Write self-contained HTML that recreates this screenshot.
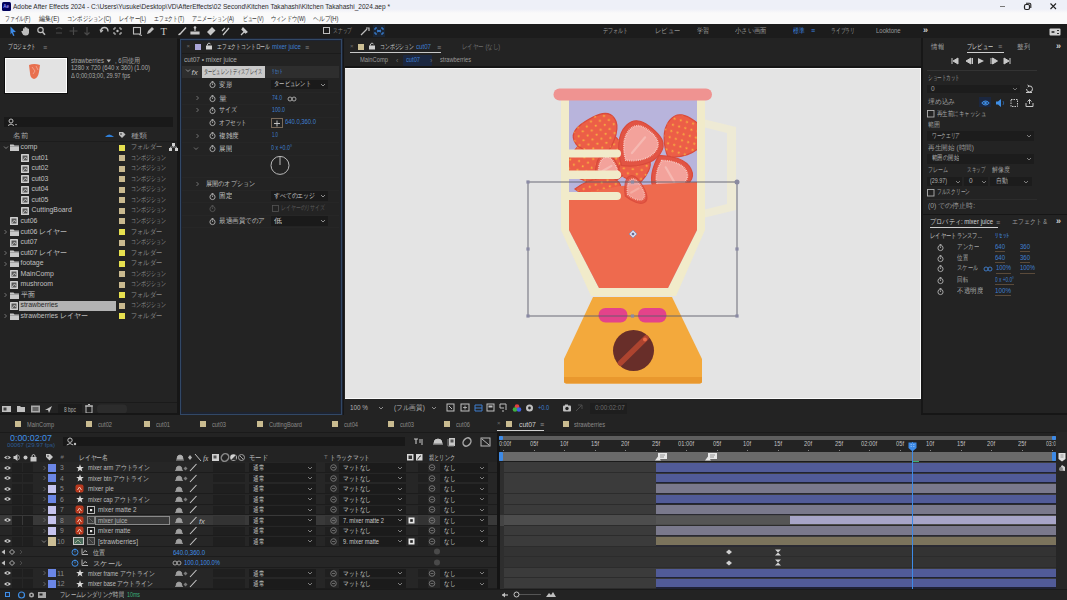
<!DOCTYPE html>
<html><head><meta charset="utf-8">
<style>
*{box-sizing:border-box;margin:0;padding:0}
html,body{width:1067px;height:600px;overflow:hidden}
body{position:relative;background:#161616;font-family:"Liberation Sans",sans-serif;color:#a8a8a8;font-size:7px;line-height:1}
.a{position:absolute}
.t{position:absolute;white-space:nowrap}
svg{overflow:visible}
</style></head><body>

<div class="a" style="left:0px;top:0px;width:1067px;height:13px;background:linear-gradient(#eef0f8 0,#eef0f8 9px,#fafafa 13px);"></div>
<div class="a" style="left:2px;top:2px;width:9px;height:9px;background:#00005b;border-radius:1.5px"></div>
<div class="t" style="left:3.2px;top:3.67px;font-size:4.5px;line-height:5.85px;color:#9999ff;font-weight:bold;">Ae</div>
<div class="t" id="t3" style="left:13px;top:1.72px;font-size:7.5px;line-height:9.75px;color:#2c2c2c;transform:scaleX(0.872);transform-origin:0 50%;">Adobe After Effects 2024 - C:\Users\Yusuke\Desktop\VD\AfterEffects\02 Second\Kitchen Takahashi\Kitchen Takahashi_2024.aep *</div>
<div class="a" style="left:999.5px;top:5.5px;width:5px;height:1px;background:#777;"></div>
<svg class="a" style="left:1023px;top:2px;" width="9" height="9" viewBox="0 0 9 9"><rect x="1.5" y="2.5" width="5" height="5" rx="1.5" fill="none" stroke="#222" stroke-width="1.2"/><path d="M3 1.2 L6.5 1.2 Q7.8 1.2 7.8 2.5 L7.8 6" fill="none" stroke="#222" stroke-width="1.1"/></svg>
<svg class="a" style="left:1049px;top:2px;" width="9" height="9" viewBox="0 0 9 9"><path d="M1.5 1.5 L7 7 M7 1.5 L1.5 7" stroke="#222" stroke-width="1.1"/></svg>
<div class="a" style="left:0px;top:13px;width:1067px;height:11px;background:#fafafa;"></div>
<div class="t" id="t8" style="left:4.6px;top:13.75px;font-size:7px;line-height:9.1px;color:#2e2e2e;transform:scaleX(0.687);transform-origin:0 50%;">ファイル(F)</div>
<div class="t" id="t9" style="left:38.5px;top:13.75px;font-size:7px;line-height:9.1px;color:#2e2e2e;transform:scaleX(0.865);transform-origin:0 50%;">編集(E)</div>
<div class="t" id="t10" style="left:67px;top:13.75px;font-size:7px;line-height:9.1px;color:#2e2e2e;transform:scaleX(0.749);transform-origin:0 50%;">コンポジション(C)</div>
<div class="t" id="t11" style="left:119px;top:13.75px;font-size:7px;line-height:9.1px;color:#2e2e2e;transform:scaleX(0.738);transform-origin:0 50%;">レイヤー(L)</div>
<div class="t" id="t12" style="left:154px;top:13.75px;font-size:7px;line-height:9.1px;color:#2e2e2e;transform:scaleX(0.683);transform-origin:0 50%;">エフェクト(T)</div>
<div class="t" id="t13" style="left:192px;top:13.75px;font-size:7px;line-height:9.1px;color:#2e2e2e;transform:scaleX(0.720);transform-origin:0 50%;">アニメーション(A)</div>
<div class="t" id="t14" style="left:242.5px;top:13.75px;font-size:7px;line-height:9.1px;color:#2e2e2e;transform:scaleX(0.676);transform-origin:0 50%;">ビュー(V)</div>
<div class="t" id="t15" style="left:271px;top:13.75px;font-size:7px;line-height:9.1px;color:#2e2e2e;transform:scaleX(0.748);transform-origin:0 50%;">ウィンドウ(W)</div>
<div class="t" id="t16" style="left:313px;top:13.75px;font-size:7px;line-height:9.1px;color:#2e2e2e;transform:scaleX(0.830);transform-origin:0 50%;">ヘルプ(H)</div>
<div class="a" style="left:0px;top:24px;width:1067px;height:14.5px;background:#1c1c1c;"></div>
<svg class="a" style="left:0px;top:24px;" width="400" height="14" viewBox="0 0 400 14">
<path d="M10.5 2.5 L16 8 L13 8.3 L14.5 11.5 L13.2 12 L11.8 8.8 L10.5 10.5 Z" fill="#3d8ae6"/>
<path d="M23 7 L23 4.5 Q23.8 3.8 24.5 4.5 L24.5 3.2 Q25.3 2.5 26 3.2 L26 3.8 Q26.8 3.2 27.5 3.8 L27.5 4.8 Q28.3 4.3 29 4.9 L29 9 Q28.5 11.5 26 11.5 L25 11.5 Q23 11.5 22 9 L21.3 7.3 Q21.8 6.5 23 7 Z" fill="#bdbdbd"/>
<circle cx="40.5" cy="6" r="2.7" fill="none" stroke="#bdbdbd" stroke-width="1.2"/>
<path d="M42.5 8 L45 10.8" stroke="#bdbdbd" stroke-width="1.5"/>
<path d="M56 5 Q59 2.5 62 5 M56 9 L62 9" stroke="#4a4a4a" stroke-width="1.2" fill="none"/>
<path d="M73.5 3 L73.5 11 M69.5 7 L77.5 7" stroke="#4a4a4a" stroke-width="1.2"/>
<path d="M87 3 L87 11 M84.5 8.5 L87 11 L89.5 8.5" stroke="#4a4a4a" stroke-width="1.2" fill="none"/>
<path d="M101 7 Q101 3.5 104.5 3.5 Q108 3.5 108 7.5" stroke="#bdbdbd" stroke-width="1.3" fill="none"/>
<path d="M100 5.5 L101 8 L103 6" stroke="#bdbdbd" stroke-width="1.1" fill="none"/>
<path d="M114 4 L116 4 M114 4 L114 6 M121 4 L119 4 M121 4 L121 6 M114 10 L116 10 M114 10 L114 8 M121 10 L119 10 M121 10 L121 8" stroke="#bdbdbd" stroke-width="1.1"/>
<circle cx="117.5" cy="7" r="1.2" fill="#bdbdbd"/>
<rect x="133.5" y="3.5" width="7" height="6.5" fill="none" stroke="#bdbdbd" stroke-width="1.1"/>
<path d="M139 10.5 L142 11.5" stroke="#bdbdbd" stroke-width="1"/>
<path d="M147 10 L148 7 L152 3 L154 5 L150 9 Z" fill="#bdbdbd"/>
<text x="160.5" y="11" font-size="10.5" fill="#c8c8c8" font-family="Liberation Serif">T</text>
<path d="M178 11 Q179 9 180 9 L185.5 3 L186.5 4 L181 10 Q180.5 11.5 178 11 Z" fill="#c8c8c8"/>
<path d="M195 3 L195 7 M191 8 L199 8 L199 10 L191 10 Z" stroke="#c8c8c8" stroke-width="1.2" fill="#c8c8c8"/>
<circle cx="195" cy="3.5" r="1.3" fill="#c8c8c8"/>
<path d="M207 8 L212 3 L215.5 6.5 L210.5 11.5 Z" fill="#c8c8c8"/>
<path d="M223 11 L229 4 M222 7 L225 4" stroke="#c8c8c8" stroke-width="1.2"/>
<path d="M241 11 L244 8 M243 4 L247 8 L245.5 9 L242 5.5 Z" stroke="#c8c8c8" stroke-width="1.2" fill="#c8c8c8"/>
<rect x="323.5" y="3.5" width="6" height="6" fill="none" stroke="#bdbdbd" stroke-width="1"/>
<path d="M361 11 L365 7 L367 5 M366 4 L369 4 L369 7" stroke="#bdbdbd" stroke-width="1.2" fill="none"/>
<rect x="373" y="1" width="12" height="12" fill="#1b2533"/>
<path d="M375 4 L377 4 M375 4 L375 6 M383 4 L381 4 M383 4 L383 6 M375 10 L377 10 M375 10 L375 8 M383 10 L381 10 M383 10 L383 8 M377 6 L381 8 M381 6 L377 8" stroke="#3d8ae6" stroke-width="1"/>
</svg>
<div class="t" id="t19" style="left:333px;top:26.45px;font-size:7px;line-height:9.1px;color:#8a8a8a;transform:scaleX(0.679);transform-origin:0 50%;">スナップ</div>
<div class="t" id="t20" style="left:602.5px;top:26.58px;font-size:6.8px;line-height:8.84px;color:#9a9a9a;transform:scaleX(0.729);transform-origin:0 50%;">デフォルト</div>
<div class="t" id="t21" style="left:655px;top:26.58px;font-size:6.8px;line-height:8.84px;color:#9a9a9a;transform:scaleX(0.893);transform-origin:0 50%;">レビュー</div>
<div class="t" id="t22" style="left:697px;top:26.58px;font-size:6.8px;line-height:8.84px;color:#9a9a9a;transform:scaleX(0.857);transform-origin:0 50%;">学習</div>
<div class="t" id="t23" style="left:735px;top:26.58px;font-size:6.8px;line-height:8.84px;color:#9a9a9a;transform:scaleX(0.903);transform-origin:0 50%;">小さい画面</div>
<div class="t" id="t24" style="left:792.5px;top:26.58px;font-size:6.8px;line-height:8.84px;color:#3d8ae6;transform:scaleX(0.821);transform-origin:0 50%;">標準</div>
<div class="t" id="t25" style="left:830.5px;top:26.58px;font-size:6.8px;line-height:8.84px;color:#9a9a9a;transform:scaleX(0.689);transform-origin:0 50%;">ライブラリ</div>
<div class="t" id="t26" style="left:876px;top:26.58px;font-size:6.8px;line-height:8.84px;color:#9a9a9a;transform:scaleX(0.883);transform-origin:0 50%;">Looktone</div>
<div class="t" style="left:811px;top:26.45px;font-size:7px;line-height:9.1px;color:#3d8ae6;">≡</div>
<div class="t" style="left:923px;top:24.75px;font-size:9px;line-height:11.7px;color:#d0d0d0;font-weight:bold;">»</div>
<svg class="a" style="left:1049px;top:27.5px;" width="12" height="8" viewBox="0 0 12 8"><rect x="0.5" y="0.5" width="11" height="7" rx="1" fill="#d0d0d0"/><path d="M2 4 Q4 2 6 4 Q4 6 2 4 Z" fill="#333"/><path d="M8 2.5 L10 2.5 M8 5.5 L10 5.5" stroke="#333" stroke-width="1"/></svg>
<div class="a" style="left:0px;top:38px;width:177px;height:376px;background:#232323;"></div>
<div class="t" id="t31" style="left:8px;top:42.25px;font-size:7px;line-height:9.1px;color:#d0d0d0;transform:scaleX(0.667);transform-origin:0 50%;">プロジェクト</div>
<div class="t" style="left:43px;top:42.75px;font-size:7px;line-height:9.1px;color:#8a8a8a;">≡</div>
<div class="a" style="left:4px;top:57px;width:64px;height:37px;background:#0e0e0e;"></div>
<div class="a" style="left:5px;top:58px;width:62px;height:35px;background:#ffffff;"></div>
<div class="a" style="left:6px;top:59px;width:60px;height:33px;background:#e3e3e3;"></div>
<svg class="a" style="left:26px;top:62px;" width="18" height="20" viewBox="0 0 18 20"><path d="M3 3 Q8 1 14 3 L13 10 Q12 16 8 17 Q4 16 4 11 Z" fill="#e8704f"/><path d="M6 5 L9 9 L7 12 M10 4 L12 8" stroke="#f3a08a" stroke-width="1" fill="none"/></svg>
<div class="t" id="t37" style="left:71px;top:56.78px;font-size:6.8px;line-height:8.84px;color:#a8a8a8;transform:scaleX(0.892);transform-origin:0 50%;">strawberries</div>
<svg class="a" style="left:106px;top:59.3px;" width="6" height="4" viewBox="0 0 6 4"><path d="M0.5 0.5 L5 0.5 L2.75 3.5 Z" fill="#b0b0b0"/></svg>
<div class="t" id="t39" style="left:115px;top:56.78px;font-size:6.8px;line-height:8.84px;color:#a8a8a8;transform:scaleX(0.875);transform-origin:0 50%;">, 6回使用</div>
<div class="t" id="t40" style="left:71px;top:64.48px;font-size:6.8px;line-height:8.84px;color:#a8a8a8;transform:scaleX(0.882);transform-origin:0 50%;">1280 x 720 (640 x 360) (1.00)</div>
<div class="t" id="t41" style="left:71px;top:71.58px;font-size:6.8px;line-height:8.84px;color:#a8a8a8;transform:scaleX(0.844);transform-origin:0 50%;">Δ 0;00;03;00, 29.97 fps</div>
<div class="a" style="left:4px;top:117px;width:169px;height:10px;background:#191919;"></div>
<svg class="a" style="left:7px;top:118px;" width="12" height="8" viewBox="0 0 12 8"><circle cx="4" cy="3" r="2" fill="none" stroke="#bdbdbd" stroke-width="1"/><path d="M1 7.5 Q4 4.5 7 7.5" stroke="#bdbdbd" fill="none"/><path d="M8 6 L10 6 L9 7.5Z" fill="#bdbdbd"/></svg>
<div class="t" id="t44" style="left:13px;top:130.95px;font-size:7px;line-height:9.1px;color:#a8a8a8;transform:scaleX(1.071);transform-origin:0 50%;">名前</div>
<svg class="a" style="left:104px;top:132px;" width="11" height="6" viewBox="0 0 11 6"><path d="M1 5 Q5 0 10 5 Z" fill="#2f7fd8"/></svg>
<svg class="a" style="left:118px;top:131px;" width="8" height="8" viewBox="0 0 8 8"><path d="M1 1 L5 1 L7.5 3.5 L4 7 L1 4 Z" fill="#bdbdbd"/><circle cx="3" cy="3" r="0.8" fill="#232323"/></svg>
<div class="t" id="t47" style="left:131px;top:130.95px;font-size:7px;line-height:9.1px;color:#a8a8a8;transform:scaleX(1.143);transform-origin:0 50%;">種類</div>
<div class="a" style="left:0px;top:141px;width:177px;height:0.8px;background:#1c1c1c;"></div>
<svg class="a" style="left:3px;top:145.1px;" width="6" height="5" viewBox="0 0 6 5"><path d="M1 1.5 L3 3.5 L5 1.5" stroke="#8a8a8a" fill="none" stroke-width="0.9"/></svg>
<svg class="a" style="left:10px;top:144.1px;" width="9" height="7" viewBox="0 0 9 7"><path d="M0 0.5 L3.5 0.5 L4.5 1.5 L9 1.5 L9 7 L0 7 Z" fill="#c8c8c8"/><rect x="0" y="2.4" width="9" height="0.6" fill="#8a8a8a"/></svg>
<div class="t" style="left:20.5px;top:143.11px;font-size:6.9px;line-height:8.97px;color:#c0c0c0;">comp</div>
<div class="a" style="left:119px;top:144.6px;width:6px;height:6px;background:#e6e04f;"></div>
<div class="t" id="t53" style="left:131px;top:143.11px;font-size:6.9px;line-height:8.97px;color:#8e8e8e;transform:scaleX(0.886);transform-origin:0 50%;overflow:hidden;">フォルダー</div>
<svg class="a" style="left:21px;top:154.15px;" width="8" height="8" viewBox="0 0 8 8"><rect x="0" y="0" width="8" height="8" fill="#cfcfcf" rx="0.5"/><rect x="1.5" y="1.5" width="5" height="5" fill="#5a5a5a"/><path d="M2 6 L4.5 3 L6 5" stroke="#cfcfcf" stroke-width="0.8" fill="none"/></svg>
<div class="t" style="left:31.5px;top:153.66px;font-size:6.9px;line-height:8.97px;color:#c0c0c0;">cut01</div>
<div class="a" style="left:119px;top:155.15px;width:6px;height:6px;background:#c9b98f;"></div>
<div class="t" id="t57" style="left:131px;top:153.66px;font-size:6.9px;line-height:8.97px;color:#8e8e8e;transform:scaleX(0.714);transform-origin:0 50%;overflow:hidden;">コンポジション</div>
<svg class="a" style="left:21px;top:164.7px;" width="8" height="8" viewBox="0 0 8 8"><rect x="0" y="0" width="8" height="8" fill="#cfcfcf" rx="0.5"/><rect x="1.5" y="1.5" width="5" height="5" fill="#5a5a5a"/><path d="M2 6 L4.5 3 L6 5" stroke="#cfcfcf" stroke-width="0.8" fill="none"/></svg>
<div class="t" style="left:31.5px;top:164.21px;font-size:6.9px;line-height:8.97px;color:#c0c0c0;">cut02</div>
<div class="a" style="left:119px;top:165.7px;width:6px;height:6px;background:#c9b98f;"></div>
<div class="t" id="t61" style="left:131px;top:164.21px;font-size:6.9px;line-height:8.97px;color:#8e8e8e;transform:scaleX(0.714);transform-origin:0 50%;overflow:hidden;">コンポジション</div>
<svg class="a" style="left:21px;top:175.25px;" width="8" height="8" viewBox="0 0 8 8"><rect x="0" y="0" width="8" height="8" fill="#cfcfcf" rx="0.5"/><rect x="1.5" y="1.5" width="5" height="5" fill="#5a5a5a"/><path d="M2 6 L4.5 3 L6 5" stroke="#cfcfcf" stroke-width="0.8" fill="none"/></svg>
<div class="t" style="left:31.5px;top:174.76px;font-size:6.9px;line-height:8.97px;color:#c0c0c0;">cut03</div>
<div class="a" style="left:119px;top:176.25px;width:6px;height:6px;background:#c9b98f;"></div>
<div class="t" id="t65" style="left:131px;top:174.76px;font-size:6.9px;line-height:8.97px;color:#8e8e8e;transform:scaleX(0.714);transform-origin:0 50%;overflow:hidden;">コンポジション</div>
<svg class="a" style="left:21px;top:185.8px;" width="8" height="8" viewBox="0 0 8 8"><rect x="0" y="0" width="8" height="8" fill="#cfcfcf" rx="0.5"/><rect x="1.5" y="1.5" width="5" height="5" fill="#5a5a5a"/><path d="M2 6 L4.5 3 L6 5" stroke="#cfcfcf" stroke-width="0.8" fill="none"/></svg>
<div class="t" style="left:31.5px;top:185.31px;font-size:6.9px;line-height:8.97px;color:#c0c0c0;">cut04</div>
<div class="a" style="left:119px;top:186.8px;width:6px;height:6px;background:#c9b98f;"></div>
<div class="t" id="t69" style="left:131px;top:185.31px;font-size:6.9px;line-height:8.97px;color:#8e8e8e;transform:scaleX(0.714);transform-origin:0 50%;overflow:hidden;">コンポジション</div>
<svg class="a" style="left:21px;top:196.35px;" width="8" height="8" viewBox="0 0 8 8"><rect x="0" y="0" width="8" height="8" fill="#cfcfcf" rx="0.5"/><rect x="1.5" y="1.5" width="5" height="5" fill="#5a5a5a"/><path d="M2 6 L4.5 3 L6 5" stroke="#cfcfcf" stroke-width="0.8" fill="none"/></svg>
<div class="t" style="left:31.5px;top:195.86px;font-size:6.9px;line-height:8.97px;color:#c0c0c0;">cut05</div>
<div class="a" style="left:119px;top:197.35px;width:6px;height:6px;background:#c9b98f;"></div>
<div class="t" id="t73" style="left:131px;top:195.86px;font-size:6.9px;line-height:8.97px;color:#8e8e8e;transform:scaleX(0.714);transform-origin:0 50%;overflow:hidden;">コンポジション</div>
<svg class="a" style="left:21px;top:206.9px;" width="8" height="8" viewBox="0 0 8 8"><rect x="0" y="0" width="8" height="8" fill="#cfcfcf" rx="0.5"/><rect x="1.5" y="1.5" width="5" height="5" fill="#5a5a5a"/><path d="M2 6 L4.5 3 L6 5" stroke="#cfcfcf" stroke-width="0.8" fill="none"/></svg>
<div class="t" style="left:31.5px;top:206.41px;font-size:6.9px;line-height:8.97px;color:#c0c0c0;">CuttingBoard</div>
<div class="a" style="left:119px;top:207.9px;width:6px;height:6px;background:#c9b98f;"></div>
<div class="t" id="t77" style="left:131px;top:206.41px;font-size:6.9px;line-height:8.97px;color:#8e8e8e;transform:scaleX(0.714);transform-origin:0 50%;overflow:hidden;">コンポジション</div>
<svg class="a" style="left:10px;top:217.45px;" width="8" height="8" viewBox="0 0 8 8"><rect x="0" y="0" width="8" height="8" fill="#cfcfcf" rx="0.5"/><rect x="1.5" y="1.5" width="5" height="5" fill="#5a5a5a"/><path d="M2 6 L4.5 3 L6 5" stroke="#cfcfcf" stroke-width="0.8" fill="none"/></svg>
<div class="t" style="left:20.5px;top:216.96px;font-size:6.9px;line-height:8.97px;color:#c0c0c0;">cut06</div>
<div class="a" style="left:119px;top:218.45px;width:6px;height:6px;background:#c9b98f;"></div>
<div class="t" id="t81" style="left:131px;top:216.96px;font-size:6.9px;line-height:8.97px;color:#8e8e8e;transform:scaleX(0.714);transform-origin:0 50%;overflow:hidden;">コンポジション</div>
<svg class="a" style="left:3px;top:229.0px;" width="5" height="6" viewBox="0 0 5 6"><path d="M1.5 1 L3.5 3 L1.5 5" stroke="#7a7a7a" fill="none" stroke-width="0.9"/></svg>
<svg class="a" style="left:10px;top:228.5px;" width="9" height="7" viewBox="0 0 9 7"><path d="M0 0.5 L3.5 0.5 L4.5 1.5 L9 1.5 L9 7 L0 7 Z" fill="#c8c8c8"/><rect x="0" y="2.4" width="9" height="0.6" fill="#8a8a8a"/></svg>
<div class="t" style="left:20.5px;top:227.51px;font-size:6.9px;line-height:8.97px;color:#c0c0c0;">cut06 レイヤー</div>
<div class="a" style="left:119px;top:229.0px;width:6px;height:6px;background:#e6e04f;"></div>
<div class="t" id="t86" style="left:131px;top:227.51px;font-size:6.9px;line-height:8.97px;color:#8e8e8e;transform:scaleX(0.886);transform-origin:0 50%;overflow:hidden;">フォルダー</div>
<svg class="a" style="left:10px;top:238.55px;" width="8" height="8" viewBox="0 0 8 8"><rect x="0" y="0" width="8" height="8" fill="#cfcfcf" rx="0.5"/><rect x="1.5" y="1.5" width="5" height="5" fill="#5a5a5a"/><path d="M2 6 L4.5 3 L6 5" stroke="#cfcfcf" stroke-width="0.8" fill="none"/></svg>
<div class="t" style="left:20.5px;top:238.06px;font-size:6.9px;line-height:8.97px;color:#c0c0c0;">cut07</div>
<div class="a" style="left:119px;top:239.55px;width:6px;height:6px;background:#c9b98f;"></div>
<div class="t" id="t90" style="left:131px;top:238.06px;font-size:6.9px;line-height:8.97px;color:#8e8e8e;transform:scaleX(0.714);transform-origin:0 50%;overflow:hidden;">コンポジション</div>
<svg class="a" style="left:3px;top:250.1px;" width="5" height="6" viewBox="0 0 5 6"><path d="M1.5 1 L3.5 3 L1.5 5" stroke="#7a7a7a" fill="none" stroke-width="0.9"/></svg>
<svg class="a" style="left:10px;top:249.6px;" width="9" height="7" viewBox="0 0 9 7"><path d="M0 0.5 L3.5 0.5 L4.5 1.5 L9 1.5 L9 7 L0 7 Z" fill="#c8c8c8"/><rect x="0" y="2.4" width="9" height="0.6" fill="#8a8a8a"/></svg>
<div class="t" style="left:20.5px;top:248.61px;font-size:6.9px;line-height:8.97px;color:#c0c0c0;">cut07 レイヤー</div>
<div class="a" style="left:119px;top:250.1px;width:6px;height:6px;background:#e6e04f;"></div>
<div class="t" id="t95" style="left:131px;top:248.61px;font-size:6.9px;line-height:8.97px;color:#8e8e8e;transform:scaleX(0.886);transform-origin:0 50%;overflow:hidden;">フォルダー</div>
<svg class="a" style="left:3px;top:260.65px;" width="5" height="6" viewBox="0 0 5 6"><path d="M1.5 1 L3.5 3 L1.5 5" stroke="#7a7a7a" fill="none" stroke-width="0.9"/></svg>
<svg class="a" style="left:10px;top:260.15px;" width="9" height="7" viewBox="0 0 9 7"><path d="M0 0.5 L3.5 0.5 L4.5 1.5 L9 1.5 L9 7 L0 7 Z" fill="#c8c8c8"/><rect x="0" y="2.4" width="9" height="0.6" fill="#8a8a8a"/></svg>
<div class="t" style="left:20.5px;top:259.16px;font-size:6.9px;line-height:8.97px;color:#c0c0c0;">footage</div>
<div class="a" style="left:119px;top:260.65px;width:6px;height:6px;background:#e6e04f;"></div>
<div class="t" id="t100" style="left:131px;top:259.16px;font-size:6.9px;line-height:8.97px;color:#8e8e8e;transform:scaleX(0.886);transform-origin:0 50%;overflow:hidden;">フォルダー</div>
<svg class="a" style="left:10px;top:270.2px;" width="8" height="8" viewBox="0 0 8 8"><rect x="0" y="0" width="8" height="8" fill="#cfcfcf" rx="0.5"/><rect x="1.5" y="1.5" width="5" height="5" fill="#5a5a5a"/><path d="M2 6 L4.5 3 L6 5" stroke="#cfcfcf" stroke-width="0.8" fill="none"/></svg>
<div class="t" style="left:20.5px;top:269.71px;font-size:6.9px;line-height:8.97px;color:#c0c0c0;">MainComp</div>
<div class="a" style="left:119px;top:271.2px;width:6px;height:6px;background:#c9b98f;"></div>
<div class="t" id="t104" style="left:131px;top:269.71px;font-size:6.9px;line-height:8.97px;color:#8e8e8e;transform:scaleX(0.714);transform-origin:0 50%;overflow:hidden;">コンポジション</div>
<svg class="a" style="left:10px;top:280.75px;" width="8" height="8" viewBox="0 0 8 8"><rect x="0" y="0" width="8" height="8" fill="#cfcfcf" rx="0.5"/><rect x="1.5" y="1.5" width="5" height="5" fill="#5a5a5a"/><path d="M2 6 L4.5 3 L6 5" stroke="#cfcfcf" stroke-width="0.8" fill="none"/></svg>
<div class="t" style="left:20.5px;top:280.26px;font-size:6.9px;line-height:8.97px;color:#c0c0c0;">mushroom</div>
<div class="a" style="left:119px;top:281.75px;width:6px;height:6px;background:#c9b98f;"></div>
<div class="t" id="t108" style="left:131px;top:280.26px;font-size:6.9px;line-height:8.97px;color:#8e8e8e;transform:scaleX(0.714);transform-origin:0 50%;overflow:hidden;">コンポジション</div>
<svg class="a" style="left:3px;top:292.3px;" width="5" height="6" viewBox="0 0 5 6"><path d="M1.5 1 L3.5 3 L1.5 5" stroke="#7a7a7a" fill="none" stroke-width="0.9"/></svg>
<svg class="a" style="left:10px;top:291.8px;" width="9" height="7" viewBox="0 0 9 7"><path d="M0 0.5 L3.5 0.5 L4.5 1.5 L9 1.5 L9 7 L0 7 Z" fill="#c8c8c8"/><rect x="0" y="2.4" width="9" height="0.6" fill="#8a8a8a"/></svg>
<div class="t" style="left:20.5px;top:290.81px;font-size:6.9px;line-height:8.97px;color:#c0c0c0;">平面</div>
<div class="a" style="left:119px;top:292.3px;width:6px;height:6px;background:#e6e04f;"></div>
<div class="t" id="t113" style="left:131px;top:290.81px;font-size:6.9px;line-height:8.97px;color:#8e8e8e;transform:scaleX(0.886);transform-origin:0 50%;overflow:hidden;">フォルダー</div>
<div class="a" style="left:19px;top:300.85px;width:97px;height:10px;background:#b3b3b3;"></div>
<svg class="a" style="left:10px;top:301.85px;" width="8" height="8" viewBox="0 0 8 8"><rect x="0" y="0" width="8" height="8" fill="#cfcfcf" rx="0.5"/><rect x="1.5" y="1.5" width="5" height="5" fill="#5a5a5a"/><path d="M2 6 L4.5 3 L6 5" stroke="#cfcfcf" stroke-width="0.8" fill="none"/></svg>
<div class="t" style="left:20.5px;top:301.37px;font-size:6.9px;line-height:8.97px;color:#2a2a2a;">strawberries</div>
<div class="a" style="left:119px;top:302.85px;width:6px;height:6px;background:#c9b98f;"></div>
<div class="t" id="t118" style="left:131px;top:301.37px;font-size:6.9px;line-height:8.97px;color:#8e8e8e;transform:scaleX(0.714);transform-origin:0 50%;overflow:hidden;">コンポジション</div>
<svg class="a" style="left:3px;top:313.4px;" width="5" height="6" viewBox="0 0 5 6"><path d="M1.5 1 L3.5 3 L1.5 5" stroke="#7a7a7a" fill="none" stroke-width="0.9"/></svg>
<svg class="a" style="left:10px;top:312.9px;" width="9" height="7" viewBox="0 0 9 7"><path d="M0 0.5 L3.5 0.5 L4.5 1.5 L9 1.5 L9 7 L0 7 Z" fill="#c8c8c8"/><rect x="0" y="2.4" width="9" height="0.6" fill="#8a8a8a"/></svg>
<div class="t" style="left:20.5px;top:311.91px;font-size:6.9px;line-height:8.97px;color:#c0c0c0;">strawberries レイヤー</div>
<div class="a" style="left:119px;top:313.4px;width:6px;height:6px;background:#e6e04f;"></div>
<div class="t" id="t123" style="left:131px;top:311.91px;font-size:6.9px;line-height:8.97px;color:#8e8e8e;transform:scaleX(0.886);transform-origin:0 50%;overflow:hidden;">フォルダー</div>
<svg class="a" style="left:169px;top:143px;" width="9" height="8" viewBox="0 0 9 8"><rect x="3" y="0" width="3" height="3" fill="#d0d0d0"/><rect x="0" y="5" width="3" height="3" fill="#d0d0d0"/><rect x="6" y="5" width="3" height="3" fill="#d0d0d0"/><path d="M4.5 3 L4.5 4 M1.5 5 L1.5 4 L7.5 4 L7.5 5" stroke="#d0d0d0" stroke-width="0.7" fill="none"/></svg>
<div class="a" style="left:0px;top:403px;width:177px;height:12px;background:#232323;"></div>
<div class="a" style="left:0px;top:402px;width:177px;height:1px;background:#1a1a1a;"></div>
<svg class="a" style="left:0px;top:403px;" width="180" height="12" viewBox="0 0 180 12">
<rect x="2" y="3" width="9" height="6" fill="#c0c0c0"/><rect x="3.5" y="4.5" width="3" height="3" fill="#444"/>
<path d="M17 3 L20 3 L21 4 L25 4 L25 9 L17 9 Z" fill="#c0c0c0"/>
<rect x="31" y="2.5" width="9" height="7" fill="#aaa"/><rect x="32.5" y="4" width="6" height="4" fill="#666"/>
<path d="M45 7 L52 3 L49 10 L48 7 Z" fill="#c0c0c0"/>
<rect x="58" y="1" width="24" height="10.5" fill="#1c1c1c" rx="1"/>
<rect x="86" y="3" width="6" height="7" fill="none" stroke="#bdbdbd" stroke-width="1"/><path d="M85 3 L93 3 M88 1.5 L90 1.5" stroke="#bdbdbd" stroke-width="1"/>
<rect x="97" y="1.5" width="30" height="9" fill="#2c2c2c" rx="4"/>
</svg>
<div class="t" id="t128" style="left:64px;top:405.97px;font-size:6.5px;line-height:8.45px;color:#b0b0b0;transform:scaleX(0.754);transform-origin:0 50%;">8 bpc</div>
<div class="a" style="left:179.5px;top:38px;width:163px;height:377.3px;background:#1d2330;"></div>
<div class="a" style="left:180px;top:38.5px;width:162px;height:376.3px;border:1.2px solid #324866;background:transparent;"></div>
<div class="a" style="left:182.3px;top:40.7px;width:157.4px;height:371.8px;background:#232323;"></div>
<div class="t" style="left:186.5px;top:43.1px;font-size:6px;line-height:7.8px;color:#6a6a6a;">×</div>
<div class="a" style="left:195px;top:44px;width:5.5px;height:5.5px;background:#a9a4d8;"></div>
<svg class="a" style="left:205px;top:42px;" width="8" height="8" viewBox="0 0 8 8"><rect x="1" y="3.5" width="6" height="4" fill="#d0d0d0"/><path d="M2.5 3.5 L2.5 2 Q4 0 5.5 2" stroke="#d0d0d0" fill="none" stroke-width="0.9"/></svg>
<div class="t" id="t135" style="left:217px;top:42.45px;font-size:7px;line-height:9.1px;color:#d0d0d0;transform:scaleX(0.688);transform-origin:0 50%;">エフェクトコントロール</div>
<div class="t" id="t136" style="left:272px;top:42.58px;font-size:6.8px;line-height:8.84px;color:#3f7fd0;transform:scaleX(0.893);transform-origin:0 50%;">mixer juice</div>
<div class="t" style="left:305px;top:42.75px;font-size:7px;line-height:9.1px;color:#8a8a8a;">≡</div>
<div class="a" style="left:181.5px;top:53px;width:159px;height:1px;background:#1b1b1b;"></div>
<div class="t" id="t139" style="left:184px;top:56.18px;font-size:6.8px;line-height:8.84px;color:#a8a8a8;transform:scaleX(0.959);transform-origin:0 50%;">cut07 • mixer juice</div>
<div class="a" style="left:181.5px;top:65.5px;width:157px;height:12.5px;background:#2e2e2e;"></div>
<svg class="a" style="left:185px;top:68px;" width="6" height="5" viewBox="0 0 6 5"><path d="M1 1.5 L3 3.5 L5 1.5" stroke="#9a9a9a" fill="none" stroke-width="0.9"/></svg>
<div class="t" style="left:191.5px;top:67.8px;font-size:8px;line-height:10.4px;color:#c0c0c0;font-family:"Liberation Serif",serif;"><i>fx</i></div>
<div class="a" style="left:202px;top:66px;width:63px;height:11.5px;background:#c9c9c9;"></div>
<div class="t" id="t144" style="left:204px;top:67.45px;font-size:7px;line-height:9.1px;color:#3a3a3a;transform:scaleX(0.592);transform-origin:0 50%;overflow:hidden;">タービュレントディスプレイス</div>
<div class="t" id="t145" style="left:272px;top:67.58px;font-size:6.8px;line-height:8.84px;color:#3f7fd0;transform:scaleX(0.625);transform-origin:0 50%;">ﾘｾｯﾄ</div>
<svg class="a" style="left:209px;top:81.2px;" width="7" height="7" viewBox="0 0 7 7"><circle cx="3.5" cy="4" r="2.6" fill="none" stroke="#b0b0b0" stroke-width="0.9"/><path d="M3.5 0.5 L3.5 1.5 M2.5 0.5 L4.5 0.5 M3.5 4 L3.5 2.5" stroke="#b0b0b0" stroke-width="0.8"/></svg>
<div class="t" id="t147" style="left:219px;top:80.15px;font-size:7px;line-height:9.1px;color:#c0c0c0;transform:scaleX(0.929);transform-origin:0 50%;">変形</div>
<div class="a" style="left:271px;top:79.7px;width:57px;height:9.6px;background:#1a1a1a;"></div>
<div class="t" id="t149" style="left:274px;top:80.08px;font-size:6.8px;line-height:8.84px;color:#c8c8c8;transform:scaleX(0.755);transform-origin:0 50%;">タービュレント</div>
<svg class="a" style="left:320px;top:82.5px;" width="6" height="4" viewBox="0 0 6 4"><path d="M1 1 L3 3 L5 1" stroke="#9a9a9a" fill="none" stroke-width="0.9"/></svg>
<svg class="a" style="left:195px;top:95.2px;" width="5" height="6" viewBox="0 0 5 6"><path d="M1.5 1 L3.5 3 L1.5 5" stroke="#7a7a7a" fill="none" stroke-width="0.9"/></svg>
<svg class="a" style="left:209px;top:94.7px;" width="7" height="7" viewBox="0 0 7 7"><circle cx="3.5" cy="4" r="2.6" fill="none" stroke="#b0b0b0" stroke-width="0.9"/><path d="M3.5 0.5 L3.5 1.5 M2.5 0.5 L4.5 0.5 M3.5 4 L3.5 2.5" stroke="#b0b0b0" stroke-width="0.8"/></svg>
<div class="t" id="t153" style="left:219px;top:93.65px;font-size:7px;line-height:9.1px;color:#c0c0c0;transform:scaleX(1.143);transform-origin:0 50%;">量</div>
<div class="t" id="t154" style="left:272px;top:93.78px;font-size:6.8px;line-height:8.84px;color:#3f7fd0;transform:scaleX(0.756);transform-origin:0 50%;">74.0</div>
<svg class="a" style="left:287px;top:95.5px;" width="10" height="6" viewBox="0 0 10 6"><circle cx="3" cy="3" r="2" fill="none" stroke="#b0b0b0" stroke-width="0.9"/><circle cx="7" cy="3" r="2" fill="none" stroke="#b0b0b0" stroke-width="0.9"/></svg>
<svg class="a" style="left:195px;top:107px;" width="5" height="6" viewBox="0 0 5 6"><path d="M1.5 1 L3.5 3 L1.5 5" stroke="#7a7a7a" fill="none" stroke-width="0.9"/></svg>
<svg class="a" style="left:209px;top:106.5px;" width="7" height="7" viewBox="0 0 7 7"><circle cx="3.5" cy="4" r="2.6" fill="none" stroke="#b0b0b0" stroke-width="0.9"/><path d="M3.5 0.5 L3.5 1.5 M2.5 0.5 L4.5 0.5 M3.5 4 L3.5 2.5" stroke="#b0b0b0" stroke-width="0.8"/></svg>
<div class="t" id="t158" style="left:219px;top:105.45px;font-size:7px;line-height:9.1px;color:#c0c0c0;transform:scaleX(0.857);transform-origin:0 50%;">サイズ</div>
<div class="t" id="t159" style="left:272px;top:105.58px;font-size:6.8px;line-height:8.84px;color:#3f7fd0;transform:scaleX(0.764);transform-origin:0 50%;">100.0</div>
<svg class="a" style="left:209px;top:119.2px;" width="7" height="7" viewBox="0 0 7 7"><circle cx="3.5" cy="4" r="2.6" fill="none" stroke="#b0b0b0" stroke-width="0.9"/><path d="M3.5 0.5 L3.5 1.5 M2.5 0.5 L4.5 0.5 M3.5 4 L3.5 2.5" stroke="#b0b0b0" stroke-width="0.8"/></svg>
<div class="t" id="t161" style="left:219px;top:118.15px;font-size:7px;line-height:9.1px;color:#c0c0c0;transform:scaleX(0.800);transform-origin:0 50%;">オフセット</div>
<div class="a" style="left:271px;top:117.5px;width:11.5px;height:10.5px;border:1px solid #7a6a5a;background:#232323;"></div>
<svg class="a" style="left:272px;top:118.5px;" width="10" height="9" viewBox="0 0 10 9"><path d="M5 1.5 L5 7.5 M2 4.5 L8 4.5" stroke="#c0c0c0" stroke-width="1"/></svg>
<div class="t" id="t164" style="left:285px;top:118.28px;font-size:6.8px;line-height:8.84px;color:#3f7fd0;transform:scaleX(0.863);transform-origin:0 50%;">640.0,360.0</div>
<svg class="a" style="left:195px;top:132.8px;" width="5" height="6" viewBox="0 0 5 6"><path d="M1.5 1 L3.5 3 L1.5 5" stroke="#7a7a7a" fill="none" stroke-width="0.9"/></svg>
<svg class="a" style="left:209px;top:132.3px;" width="7" height="7" viewBox="0 0 7 7"><circle cx="3.5" cy="4" r="2.6" fill="none" stroke="#b0b0b0" stroke-width="0.9"/><path d="M3.5 0.5 L3.5 1.5 M2.5 0.5 L4.5 0.5 M3.5 4 L3.5 2.5" stroke="#b0b0b0" stroke-width="0.8"/></svg>
<div class="t" id="t167" style="left:219px;top:131.25px;font-size:7px;line-height:9.1px;color:#c0c0c0;transform:scaleX(0.952);transform-origin:0 50%;">複雑度</div>
<div class="t" id="t168" style="left:272px;top:131.38px;font-size:6.8px;line-height:8.84px;color:#3f7fd0;transform:scaleX(0.635);transform-origin:0 50%;">1.0</div>
<svg class="a" style="left:193px;top:146.0px;" width="6" height="5" viewBox="0 0 6 5"><path d="M1 1.5 L3 3.5 L5 1.5" stroke="#7a7a7a" fill="none" stroke-width="0.9"/></svg>
<svg class="a" style="left:209px;top:145.0px;" width="7" height="7" viewBox="0 0 7 7"><circle cx="3.5" cy="4" r="2.6" fill="none" stroke="#b0b0b0" stroke-width="0.9"/><path d="M3.5 0.5 L3.5 1.5 M2.5 0.5 L4.5 0.5 M3.5 4 L3.5 2.5" stroke="#b0b0b0" stroke-width="0.8"/></svg>
<div class="t" id="t171" style="left:219px;top:143.95px;font-size:7px;line-height:9.1px;color:#c0c0c0;transform:scaleX(0.929);transform-origin:0 50%;">展開</div>
<div class="t" id="t172" style="left:271px;top:144.08px;font-size:6.8px;line-height:8.84px;color:#3f7fd0;transform:scaleX(0.775);transform-origin:0 50%;">0 x +0.0°</div>
<svg class="a" style="left:270px;top:155px;" width="20" height="20" viewBox="0 0 20 20"><circle cx="10" cy="10.4" r="9" fill="none" stroke="#b8b8b8" stroke-width="1"/><path d="M10 1.5 L10 10" stroke="#b8b8b8" stroke-width="1"/></svg>
<svg class="a" style="left:195px;top:180.6px;" width="5" height="6" viewBox="0 0 5 6"><path d="M1.5 1 L3.5 3 L1.5 5" stroke="#7a7a7a" fill="none" stroke-width="0.9"/></svg>
<div class="t" id="t175" style="left:206px;top:179.05px;font-size:7px;line-height:9.1px;color:#c0c0c0;transform:scaleX(0.875);transform-origin:0 50%;">展開のオプション</div>
<svg class="a" style="left:209px;top:192.5px;" width="7" height="7" viewBox="0 0 7 7"><circle cx="3.5" cy="4" r="2.6" fill="none" stroke="#b0b0b0" stroke-width="0.9"/><path d="M3.5 0.5 L3.5 1.5 M2.5 0.5 L4.5 0.5 M3.5 4 L3.5 2.5" stroke="#b0b0b0" stroke-width="0.8"/></svg>
<div class="t" id="t177" style="left:219px;top:191.45px;font-size:7px;line-height:9.1px;color:#c0c0c0;transform:scaleX(0.929);transform-origin:0 50%;">固定</div>
<div class="a" style="left:271px;top:191px;width:57px;height:10px;background:#1a1a1a;"></div>
<div class="t" id="t179" style="left:274px;top:191.58px;font-size:6.8px;line-height:8.84px;color:#c8c8c8;transform:scaleX(0.837);transform-origin:0 50%;">すべてのエッジ</div>
<svg class="a" style="left:320px;top:194.0px;" width="6" height="4" viewBox="0 0 6 4"><path d="M1 1 L3 3 L5 1" stroke="#9a9a9a" fill="none" stroke-width="0.9"/></svg>
<svg class="a" style="left:209px;top:204.9px;" width="7" height="7" viewBox="0 0 7 7"><circle cx="3.5" cy="4" r="2.6" fill="none" stroke="#555" stroke-width="0.9"/><path d="M3.5 0.5 L3.5 1.5 M2.5 0.5 L4.5 0.5 M3.5 4 L3.5 2.5" stroke="#555" stroke-width="0.8"/></svg>
<svg class="a" style="left:272px;top:204.5px;" width="7" height="7" viewBox="0 0 7 7"><rect x="0.5" y="0.5" width="6" height="6" fill="none" stroke="#555" stroke-width="0.8"/></svg>
<div class="t" id="t183" style="left:281px;top:203.98px;font-size:6.8px;line-height:8.84px;color:#5a5a5a;transform:scaleX(0.698);transform-origin:0 50%;">レイヤーのリサイズ</div>
<svg class="a" style="left:209px;top:217.5px;" width="7" height="7" viewBox="0 0 7 7"><circle cx="3.5" cy="4" r="2.6" fill="none" stroke="#b0b0b0" stroke-width="0.9"/><path d="M3.5 0.5 L3.5 1.5 M2.5 0.5 L4.5 0.5 M3.5 4 L3.5 2.5" stroke="#b0b0b0" stroke-width="0.8"/></svg>
<div class="t" id="t185" style="left:219px;top:216.45px;font-size:7px;line-height:9.1px;color:#c0c0c0;transform:scaleX(0.939);transform-origin:0 50%;">最適画質でのア</div>
<div class="a" style="left:271px;top:216px;width:57px;height:10px;background:#1a1a1a;"></div>
<div class="t" id="t187" style="left:274px;top:216.58px;font-size:6.8px;line-height:8.84px;color:#c8c8c8;transform:scaleX(1.143);transform-origin:0 50%;">低</div>
<svg class="a" style="left:320px;top:219.0px;" width="6" height="4" viewBox="0 0 6 4"><path d="M1 1 L3 3 L5 1" stroke="#9a9a9a" fill="none" stroke-width="0.9"/></svg>
<div class="a" style="left:181.5px;top:91.5px;width:157px;height:0.6px;background:#262626;"></div>
<div class="a" style="left:181.5px;top:104px;width:157px;height:0.6px;background:#262626;"></div>
<div class="a" style="left:181.5px;top:116.5px;width:157px;height:0.6px;background:#262626;"></div>
<div class="a" style="left:181.5px;top:129px;width:157px;height:0.6px;background:#262626;"></div>
<div class="a" style="left:181.5px;top:142px;width:157px;height:0.6px;background:#262626;"></div>
<div class="a" style="left:181.5px;top:155px;width:157px;height:0.6px;background:#262626;"></div>
<div class="a" style="left:181.5px;top:177px;width:157px;height:0.6px;background:#262626;"></div>
<div class="a" style="left:181.5px;top:189.5px;width:157px;height:0.6px;background:#262626;"></div>
<div class="a" style="left:181.5px;top:202px;width:157px;height:0.6px;background:#262626;"></div>
<div class="a" style="left:181.5px;top:214.5px;width:157px;height:0.6px;background:#262626;"></div>
<div class="a" style="left:181.5px;top:227px;width:157px;height:0.6px;background:#262626;"></div>
<div class="a" style="left:344px;top:38px;width:577px;height:377px;background:#232323;"></div>
<div class="t" style="left:350px;top:43.1px;font-size:6px;line-height:7.8px;color:#6a6a6a;">×</div>
<div class="a" style="left:358px;top:44px;width:6px;height:5.5px;background:#cdbf94;"></div>
<svg class="a" style="left:368px;top:42px;" width="8" height="8" viewBox="0 0 8 8"><rect x="1" y="3.5" width="6" height="4" fill="#d0d0d0"/><path d="M2.5 3.5 L2.5 2 Q4 0 5.5 2" stroke="#d0d0d0" fill="none" stroke-width="0.9"/></svg>
<div class="t" id="t204" style="left:380px;top:42.45px;font-size:7px;line-height:9.1px;color:#d0d0d0;transform:scaleX(0.694);transform-origin:0 50%;">コンポジション</div>
<div class="t" id="t205" style="left:416px;top:42.58px;font-size:6.8px;line-height:8.84px;color:#3f7fd0;transform:scaleX(0.901);transform-origin:0 50%;">cut07</div>
<div class="t" style="left:437px;top:42.75px;font-size:7px;line-height:9.1px;color:#8a8a8a;">≡</div>
<div class="a" style="left:350px;top:51.5px;width:91px;height:1px;background:#c8c8c8;"></div>
<div class="t" id="t208" style="left:462px;top:41.95px;font-size:7px;line-height:9.1px;color:#707070;transform:scaleX(0.782);transform-origin:0 50%;">レイヤー (なし)</div>
<div class="t" id="t209" style="left:360px;top:56.38px;font-size:6.8px;line-height:8.84px;color:#9a9a9a;transform:scaleX(0.852);transform-origin:0 50%;">MainComp</div>
<div class="t" style="left:396px;top:56.25px;font-size:7px;line-height:9.1px;color:#707070;">‹</div>
<div class="a" style="left:403px;top:55px;width:29px;height:11px;background:#1b2740;border-radius:1px"></div>
<div class="t" id="t212" style="left:406px;top:56.38px;font-size:6.8px;line-height:8.84px;color:#3f7fd0;transform:scaleX(0.841);transform-origin:0 50%;">cut07</div>
<div class="t" style="left:430px;top:56.25px;font-size:7px;line-height:9.1px;color:#707070;">›</div>
<div class="t" id="t214" style="left:440px;top:56.38px;font-size:6.8px;line-height:8.84px;color:#9a9a9a;transform:scaleX(0.837);transform-origin:0 50%;">strawberries</div>
<div class="a" style="left:345px;top:66.3px;width:576px;height:1.5px;background:#151515;"></div>
<div class="a" style="left:345px;top:68px;width:576px;height:331px;background:#e4e4e4;"></div>
<div class="a" style="left:345px;top:67.8px;width:576px;height:1px;background:#f6f6f6;"></div>
<div class="a" style="left:920px;top:68px;width:1px;height:331px;background:#fafafa;"></div>
<div class="a" style="left:345px;top:398px;width:576px;height:1px;background:#fafafa;"></div>
<svg class="a" style="left:345px;top:68px;" width="576" height="331" viewBox="0 0 576 331">
<defs>
<pattern id="dots" x="0" y="0" width="9" height="9" patternUnits="userSpaceOnUse" patternTransform="rotate(25)">
<circle cx="2.25" cy="2.25" r="1.1" fill="#f7b040"/><circle cx="6.75" cy="6.75" r="1.1" fill="#f7b040"/>
</pattern>
<clipPath id="jar"><rect x="569" y="100" width="128" height="100"/></clipPath>
</defs>
<g transform="translate(-345,-68)">
<!-- handle -->
<path d="M703 119 L736 127 L736 210 L703 218 Z M703 127 L727 133 L727 204 L703 210 Z" fill="#eeead5" fill-rule="evenodd"/>
<!-- cream jar outline -->
<path d="M561 100 L705 100 L705 230 L676 296 L591 296 L561 230 Z" fill="#f1ebca"/>
<!-- lavender inner -->
<path d="M569 100 L697 100 L697 230 L668 288 L599 288 L569 230 Z" fill="#b8b4dc"/>
<g clip-path="url(#jar)"><g transform="translate(594 161) rotate(75) translate(0 -31.0)" opacity="1"><path d="M0 62 C-12.50 53.32 -26.50 35.96 -25.00 18.60 C-24.00 1.86 -11.00 0 0 0 C11.00 0 24.00 1.86 25.00 18.60 C26.50 35.96 12.50 53.32 0 62 Z" fill="#ec5e47" stroke="#d94a3b" stroke-width="1.2"/><path d="M0 62 C-12.50 53.32 -26.50 35.96 -25.00 18.60 C-24.00 1.86 -11.00 0 0 0 C11.00 0 24.00 1.86 25.00 18.60 C26.50 35.96 12.50 53.32 0 62 Z" fill="url(#dots)"/></g><g transform="translate(598 136) rotate(-30) translate(0 -19.0)" opacity="1"><path d="M0 38 C-11.50 32.68 -24.38 22.04 -23.00 11.40 C-22.08 1.14 -10.12 0 0 0 C10.12 0 22.08 1.14 23.00 11.40 C24.38 22.04 11.50 32.68 0 38 Z" fill="#ec5e47" stroke="#d94a3b" stroke-width="1.2"/><path d="M0 38 C-11.50 32.68 -24.38 22.04 -23.00 11.40 C-22.08 1.14 -10.12 0 0 0 C10.12 0 22.08 1.14 23.00 11.40 C24.38 22.04 11.50 32.68 0 38 Z" fill="url(#dots)"/></g><g transform="translate(681 139) rotate(35) translate(0 -22.5)" opacity="1"><path d="M0 45 C-10.00 38.70 -21.20 26.10 -20.00 13.50 C-19.20 1.35 -8.80 0 0 0 C8.80 0 19.20 1.35 20.00 13.50 C21.20 26.10 10.00 38.70 0 45 Z" fill="#ec5e47" stroke="#d94a3b" stroke-width="1.2"/><path d="M0 45 C-10.00 38.70 -21.20 26.10 -20.00 13.50 C-19.20 1.35 -8.80 0 0 0 C8.80 0 19.20 1.35 20.00 13.50 C21.20 26.10 10.00 38.70 0 45 Z" fill="url(#dots)"/></g><g transform="translate(606 169) rotate(60) translate(0 -12.0)" opacity="1"><path d="M0 24 C-7.00 20.64 -14.84 13.92 -14.00 7.20 C-13.44 0.72 -6.16 0 0 0 C6.16 0 13.44 0.72 14.00 7.20 C14.84 13.92 7.00 20.64 0 24 Z" fill="#e25444" stroke="#d94a3b" stroke-width="1.2"/><g transform="translate(0 1.92)"><path d="M0 18.72 C-5.32 16.10 -11.28 10.86 -10.64 5.62 C-10.21 0.56 -4.68 0 0 0 C4.68 0 10.21 0.56 10.64 5.62 C11.28 10.86 5.32 16.10 0 18.72 Z" fill="#f3a29b" stroke="#f8c9c2" stroke-width="1.6" stroke-dasharray="0.9 0.9"/><path d="M0 3.74 L0 14.04" stroke="#f6b9b2" stroke-width="2.2" stroke-linecap="round"/></g></g><g transform="translate(636 170) rotate(-20) translate(0 -13.0)" opacity="1"><path d="M0 26 C-8.00 22.36 -16.96 15.08 -16.00 7.80 C-15.36 0.78 -7.04 0 0 0 C7.04 0 15.36 0.78 16.00 7.80 C16.96 15.08 8.00 22.36 0 26 Z" fill="#ec5e47" stroke="#d94a3b" stroke-width="1.2"/><path d="M0 26 C-8.00 22.36 -16.96 15.08 -16.00 7.80 C-15.36 0.78 -7.04 0 0 0 C7.04 0 15.36 0.78 16.00 7.80 C16.96 15.08 8.00 22.36 0 26 Z" fill="url(#dots)"/></g><g transform="translate(637 147) rotate(40) translate(0 -24.0)" opacity="1"><path d="M0 48 C-11.00 41.28 -23.32 27.84 -22.00 14.40 C-21.12 1.44 -9.68 0 0 0 C9.68 0 21.12 1.44 22.00 14.40 C23.32 27.84 11.00 41.28 0 48 Z" fill="#e25444" stroke="#d94a3b" stroke-width="1.2"/><g transform="translate(0 3.84)"><path d="M0 37.44 C-8.36 32.20 -17.72 21.72 -16.72 11.23 C-16.05 1.12 -7.36 0 0 0 C7.36 0 16.05 1.12 16.72 11.23 C17.72 21.72 8.36 32.20 0 37.44 Z" fill="#f3a29b" stroke="#f8c9c2" stroke-width="1.6" stroke-dasharray="0.9 0.9"/><path d="M0 7.49 L0 28.08" stroke="#f6b9b2" stroke-width="2.2" stroke-linecap="round"/></g></g><g transform="translate(669 173) rotate(150) translate(0 -20.0)" opacity="1"><path d="M0 40 C-10.50 34.40 -22.26 23.20 -21.00 12.00 C-20.16 1.20 -9.24 0 0 0 C9.24 0 20.16 1.20 21.00 12.00 C22.26 23.20 10.50 34.40 0 40 Z" fill="#e25444" stroke="#d94a3b" stroke-width="1.2"/><g transform="translate(0 3.20)"><path d="M0 31.200000000000003 C-7.98 26.83 -16.92 18.10 -15.96 9.36 C-15.32 0.94 -7.02 0 0 0 C7.02 0 15.32 0.94 15.96 9.36 C16.92 18.10 7.98 26.83 0 31.200000000000003 Z" fill="#f3a29b" stroke="#f8c9c2" stroke-width="1.6" stroke-dasharray="0.9 0.9"/><path d="M0 6.24 L0 23.40" stroke="#f6b9b2" stroke-width="2.2" stroke-linecap="round"/></g></g><g transform="translate(598 189) rotate(90) translate(0 -23.0)" opacity="1"><path d="M0 46 C-5.50 39.56 -11.66 26.68 -11.00 13.80 C-10.56 1.38 -4.84 0 0 0 C4.84 0 10.56 1.38 11.00 13.80 C11.66 26.68 5.50 39.56 0 46 Z" fill="#ec5e47" stroke="#d94a3b" stroke-width="1.2"/><path d="M0 46 C-5.50 39.56 -11.66 26.68 -11.00 13.80 C-10.56 1.38 -4.84 0 0 0 C4.84 0 10.56 1.38 11.00 13.80 C11.66 26.68 5.50 39.56 0 46 Z" fill="url(#dots)"/></g></g>
<!-- juice -->
<path d="M569 196 L620 186 L697 182 L697 230 L668 288 L599 288 L569 230 Z" fill="#ee6a4e"/><g transform="translate(634 191) rotate(60) translate(0 -10.0)" opacity="0.85"><path d="M0 20 C-7.50 17.20 -15.90 11.60 -15.00 6.00 C-14.40 0.60 -6.60 0 0 0 C6.60 0 14.40 0.60 15.00 6.00 C15.90 11.60 7.50 17.20 0 20 Z" fill="#e25444" stroke="#d94a3b" stroke-width="1.2"/><g transform="translate(0 1.60)"><path d="M0 15.600000000000001 C-5.70 13.42 -12.08 9.05 -11.40 4.68 C-10.94 0.47 -5.02 0 0 0 C5.02 0 10.94 0.47 11.40 4.68 C12.08 9.05 5.70 13.42 0 15.600000000000001 Z" fill="#f3a29b" stroke="#f8c9c2" stroke-width="1.6" stroke-dasharray="0.9 0.9"/><path d="M0 3.12 L0 11.70" stroke="#f6b9b2" stroke-width="2.2" stroke-linecap="round"/></g></g>
<!-- measurement bars -->
<path d="M569 149.5 L617 149.5 A4 4 0 0 1 617 157.5 L569 157.5 Z" fill="#f1ebca"/>
<path d="M569 170.5 L617 170.5 A4.2 4.2 0 0 1 617 179 L569 179 Z" fill="#f1ebca"/>
<path d="M569 192 L617 192 A4 4 0 0 1 617 200 L569 200 Z" fill="#f1ebca"/>
<!-- lid -->
<rect x="553.5" y="88.5" width="158.5" height="12" rx="6" fill="#ef9391"/>
<!-- base -->
<path d="M593 297 L672 297 L702 359 L702 381 Q702 383.5 699.5 383.5 L566.5 383.5 Q564 383.5 564 381 L564 359 Z" fill="#f3a93c"/>
<path d="M564 377 L702 377 L702 381 Q702 383.5 699.5 383.5 L566.5 383.5 Q564 383.5 564 381 Z" fill="#e9982e"/>
<rect x="598.5" y="308" width="29" height="14.5" rx="7" fill="#e4438a"/>
<rect x="638" y="308" width="28.5" height="14.5" rx="7" fill="#e4438a"/>
<circle cx="633.5" cy="350.5" r="20.5" fill="#682e29"/>
<path d="M620.5 363 L646 338" stroke="#ad442f" stroke-width="5.5" stroke-linecap="round"/>
<circle cx="645" cy="339.5" r="2" fill="#e86a48"/>
<!-- selection box -->
<rect x="528" y="182" width="209" height="134" fill="none" stroke="#5e5e6c" stroke-width="0.9"/>
<g fill="#8a8aa4"><rect x="526.4" y="180.4" width="3.2" height="3.2"/><rect x="630.9" y="180.4" width="3.2" height="3.2"/><rect x="526.4" y="247.4" width="3.2" height="3.2"/><rect x="735.4" y="247.4" width="3.2" height="3.2"/><rect x="526.4" y="314.4" width="3.2" height="3.2"/><rect x="630.9" y="314.4" width="3.2" height="3.2"/><rect x="735.4" y="314.4" width="3.2" height="3.2"/></g>
<circle cx="737" cy="182" r="2.5" fill="#8a8aa0"/>
<!-- anchor -->
<g transform="translate(633 234)"><path d="M0 -4 L4 0 L0 4 L-4 0 Z" fill="#d8d8ec" stroke="#8a8aa8" stroke-width="0.8"/><circle r="1.3" fill="#6a6a90"/></g>
</g>
</svg>
<div class="a" style="left:344px;top:399px;width:577px;height:16px;background:#232323;"></div>
<div class="t" id="t222" style="left:350px;top:403.88px;font-size:6.8px;line-height:8.84px;color:#b0b0b0;transform:scaleX(0.934);transform-origin:0 50%;">100 %</div>
<svg class="a" style="left:378px;top:406px;" width="6" height="4" viewBox="0 0 6 4"><path d="M1 1 L3 3 L5 1" stroke="#9a9a9a" fill="none" stroke-width="0.9"/></svg>
<div class="t" id="t224" style="left:394px;top:403.88px;font-size:6.8px;line-height:8.84px;color:#b0b0b0;transform:scaleX(0.953);transform-origin:0 50%;">(フル画質)</div>
<svg class="a" style="left:431px;top:406px;" width="6" height="4" viewBox="0 0 6 4"><path d="M1 1 L3 3 L5 1" stroke="#9a9a9a" fill="none" stroke-width="0.9"/></svg>
<svg class="a" style="left:444px;top:401px;" width="140" height="14" viewBox="0 0 140 14">
<rect x="3" y="3" width="7" height="7" fill="none" stroke="#c0c0c0" stroke-width="1"/><path d="M5 5 L8 8" stroke="#c0c0c0"/>
<rect x="17" y="3" width="8" height="7" fill="none" stroke="#c0c0c0" stroke-width="1"/><path d="M19 6.5 L23 6.5 M21 4.5 L21 8.5" stroke="#c0c0c0" stroke-width="0.8"/>
<path d="M31 10 L31 4 L38 4 L38 10 Z M31 7 L38 7" stroke="#3f7fd0" stroke-width="1" fill="none"/>
<rect x="43" y="3" width="7" height="7" fill="none" stroke="#c0c0c0" stroke-width="1"/><rect x="44.5" y="4.5" width="4" height="2" fill="#c0c0c0"/>
<path d="M56 3 L62 3 L62 9 M56 3 L56 7 L60 7 M59 9 L59 11" stroke="#c0c0c0" stroke-width="1" fill="none"/>
<circle cx="73" cy="5.5" r="2.3" fill="#e04040"/><circle cx="71" cy="8.5" r="2.3" fill="#40b040"/><circle cx="75" cy="8.5" r="2.3" fill="#4060e0"/>
<circle cx="85.5" cy="7" r="3.5" fill="#c0c0c0"/><circle cx="85.5" cy="7" r="1.4" fill="#232323"/>
<rect x="119" y="4.5" width="8" height="6" fill="#c0c0c0" rx="1"/><circle cx="123" cy="7.5" r="1.7" fill="#232323"/><rect x="121" y="3.5" width="3" height="1.5" fill="#c0c0c0"/>
<path d="M132 10 L138 4 M134 4 L138 4 L138 8" stroke="#4a4a4a" stroke-width="1" fill="none"/>
</svg>
<div class="t" id="t227" style="left:538px;top:404.2px;font-size:6.3px;line-height:8.19px;color:#3f7fd0;transform:scaleX(0.884);transform-origin:0 50%;">+0.0</div>
<div class="a" style="left:590px;top:402.5px;width:37px;height:11px;background:#1e1e1e;"></div>
<div class="t" id="t229" style="left:595px;top:404.2px;font-size:6.3px;line-height:8.19px;color:#6a6a6a;">0:00:02:07</div>
<div class="a" style="left:921px;top:38px;width:2.5px;height:377px;background:#171717;"></div>
<div class="a" style="left:923px;top:38px;width:144px;height:376px;background:#232323;"></div>
<div class="t" id="t232" style="left:931px;top:42.25px;font-size:7px;line-height:9.1px;color:#a0a0a0;transform:scaleX(0.929);transform-origin:0 50%;">情報</div>
<div class="t" id="t233" style="left:967px;top:42.25px;font-size:7px;line-height:9.1px;color:#d8d8d8;transform:scaleX(0.743);transform-origin:0 50%;">プレビュー</div>
<div class="t" style="left:998px;top:42.45px;font-size:7px;line-height:9.1px;color:#8a8a8a;">≡</div>
<div class="a" style="left:967px;top:51.5px;width:37px;height:1px;background:#d0d0d0;"></div>
<div class="t" id="t236" style="left:1017px;top:42.25px;font-size:7px;line-height:9.1px;color:#a0a0a0;transform:scaleX(0.929);transform-origin:0 50%;">整列</div>
<div class="t" style="left:1056px;top:40.65px;font-size:9px;line-height:11.7px;color:#d0d0d0;font-weight:bold;">»</div>
<svg class="a" style="left:945px;top:56px;" width="70" height="10" viewBox="0 0 70 10">
<path d="M7 2 L7 8 M13 2 L8 5 L13 8 Z" stroke="#c8c8c8" fill="#c8c8c8" stroke-width="1"/>
<path d="M26 2 L21 5 L26 8 Z M27.5 2 L27.5 8" stroke="#c8c8c8" fill="#c8c8c8" stroke-width="1"/>
<path d="M33 2 L39 5 L33 8 Z" fill="#c8c8c8"/>
<path d="M46 2 L46 8 M47.5 2 L52.5 5 L47.5 8 Z" stroke="#c8c8c8" fill="#c8c8c8" stroke-width="1"/>
<path d="M59 2 L64 5 L59 8 Z M65 2 L65 8" stroke="#c8c8c8" fill="#c8c8c8" stroke-width="1"/>
</svg>
<div class="a" style="left:927px;top:70px;width:110px;height:0.8px;background:#333;"></div>
<div class="t" id="t240" style="left:928px;top:73.58px;font-size:6.8px;line-height:8.84px;color:#9a9a9a;transform:scaleX(0.653);transform-origin:0 50%;">ショートカット</div>
<div class="a" style="left:927px;top:84.5px;width:93px;height:8.5px;background:#1c1c1c;"></div>
<div class="t" style="left:931px;top:84.58px;font-size:6.5px;line-height:8.45px;color:#a0a0a0;">0</div>
<svg class="a" style="left:1012px;top:87px;" width="6" height="4" viewBox="0 0 6 4"><path d="M1 1 L3 3 L5 1" stroke="#7a7a7a" fill="none" stroke-width="0.9"/></svg>
<svg class="a" style="left:1024px;top:84px;" width="10" height="10" viewBox="0 0 10 10"><path d="M2.5 5 A3 3 0 1 0 5 2 L3.5 1 M5 2 L3.8 3.3" stroke="#c8c8c8" fill="none" stroke-width="1"/><path d="M2 8.5 L8 8.5" stroke="#c8c8c8"/></svg>
<div class="t" id="t245" style="left:928px;top:97.58px;font-size:6.8px;line-height:8.84px;color:#9a9a9a;transform:scaleX(0.964);transform-origin:0 50%;">埋め込み</div>
<div class="a" style="left:979px;top:97px;width:12px;height:10px;background:#1b2740;"></div>
<svg class="a" style="left:980px;top:98px;" width="60" height="10" viewBox="0 0 60 10">
<path d="M2 5 Q5.5 1 9 5 Q5.5 9 2 5 Z" fill="none" stroke="#3f8fe6" stroke-width="1.1"/><circle cx="5.5" cy="5" r="1.3" fill="#3f8fe6"/>
<path d="M16 3.5 L18 3.5 L21 1 L21 9 L18 6.5 L16 6.5 Z" fill="#3f8fe6"/><path d="M23 3 Q24.5 5 23 7" stroke="#2a5a90" fill="none" stroke-width="1"/>
<rect x="31" y="1.5" width="6.5" height="7" fill="none" stroke="#c8c8c8" stroke-width="1" stroke-dasharray="1.5 1"/>
<path d="M46 5 L46 8.5 L53 8.5 L53 5 M49.5 6 L49.5 1.5 M47.5 3.5 L49.5 1.5 L51.5 3.5" stroke="#c8c8c8" fill="none" stroke-width="1"/>
</svg>
<svg class="a" style="left:927px;top:110px;" width="8" height="8" viewBox="0 0 8 8"><rect x="0.5" y="0.5" width="6.5" height="6.5" fill="none" stroke="#b0b0b0" stroke-width="0.9"/></svg>
<div class="t" id="t249" style="left:937px;top:109.58px;font-size:6.8px;line-height:8.84px;color:#a8a8a8;transform:scaleX(0.778);transform-origin:0 50%;">再生前にキャッシュ</div>
<div class="t" id="t250" style="left:928px;top:121.08px;font-size:6.8px;line-height:8.84px;color:#9a9a9a;transform:scaleX(0.857);transform-origin:0 50%;">範囲</div>
<div class="a" style="left:927px;top:131px;width:107px;height:10px;background:#1c1c1c;"></div>
<div class="t" id="t252" style="left:932px;top:131.58px;font-size:6.8px;line-height:8.84px;color:#b0b0b0;transform:scaleX(0.667);transform-origin:0 50%;">ワークエリア</div>
<svg class="a" style="left:1026px;top:134px;" width="6" height="4" viewBox="0 0 6 4"><path d="M1 1 L3 3 L5 1" stroke="#8a8a8a" fill="none" stroke-width="0.9"/></svg>
<div class="t" id="t254" style="left:928px;top:143.58px;font-size:6.8px;line-height:8.84px;color:#9a9a9a;transform:scaleX(0.950);transform-origin:0 50%;">再生開始 (時間)</div>
<div class="a" style="left:927px;top:153.5px;width:107px;height:10px;background:#1c1c1c;"></div>
<div class="t" id="t256" style="left:932px;top:154.08px;font-size:6.8px;line-height:8.84px;color:#b0b0b0;transform:scaleX(0.771);transform-origin:0 50%;">範囲の開始</div>
<svg class="a" style="left:1026px;top:156.5px;" width="6" height="4" viewBox="0 0 6 4"><path d="M1 1 L3 3 L5 1" stroke="#8a8a8a" fill="none" stroke-width="0.9"/></svg>
<div class="t" id="t258" style="left:928px;top:165.58px;font-size:6.8px;line-height:8.84px;color:#9a9a9a;transform:scaleX(0.714);transform-origin:0 50%;">フレーム</div>
<div class="t" id="t259" style="left:967px;top:165.58px;font-size:6.8px;line-height:8.84px;color:#9a9a9a;transform:scaleX(0.643);transform-origin:0 50%;">スキップ</div>
<div class="t" id="t260" style="left:992px;top:165.58px;font-size:6.8px;line-height:8.84px;color:#9a9a9a;transform:scaleX(0.857);transform-origin:0 50%;">解像度</div>
<div class="a" style="left:927px;top:177px;width:35px;height:9px;background:#1c1c1c;"></div>
<div class="t" id="t262" style="left:930px;top:177.28px;font-size:6.5px;line-height:8.45px;color:#b0b0b0;transform:scaleX(0.825);transform-origin:0 50%;">(29.97)</div>
<svg class="a" style="left:955px;top:179.5px;" width="6" height="4" viewBox="0 0 6 4"><path d="M1 1 L3 3 L5 1" stroke="#8a8a8a" fill="none" stroke-width="0.9"/></svg>
<div class="a" style="left:964px;top:177px;width:24px;height:9px;background:#1c1c1c;"></div>
<div class="t" style="left:969px;top:177.28px;font-size:6.5px;line-height:8.45px;color:#b0b0b0;">0</div>
<svg class="a" style="left:981px;top:179.5px;" width="6" height="4" viewBox="0 0 6 4"><path d="M1 1 L3 3 L5 1" stroke="#8a8a8a" fill="none" stroke-width="0.9"/></svg>
<div class="a" style="left:990px;top:177px;width:42px;height:9px;background:#1c1c1c;"></div>
<div class="t" id="t268" style="left:996px;top:177.08px;font-size:6.8px;line-height:8.84px;color:#b0b0b0;transform:scaleX(0.857);transform-origin:0 50%;">自動</div>
<svg class="a" style="left:1023px;top:179.5px;" width="6" height="4" viewBox="0 0 6 4"><path d="M1 1 L3 3 L5 1" stroke="#8a8a8a" fill="none" stroke-width="0.9"/></svg>
<svg class="a" style="left:927px;top:188.5px;" width="8" height="8" viewBox="0 0 8 8"><rect x="0.5" y="0.5" width="6.5" height="6.5" fill="none" stroke="#b0b0b0" stroke-width="0.9"/></svg>
<div class="t" id="t271" style="left:937px;top:188.08px;font-size:6.8px;line-height:8.84px;color:#a8a8a8;transform:scaleX(0.673);transform-origin:0 50%;">フルスクリーン</div>
<div class="a" style="left:927px;top:199px;width:110px;height:0.7px;background:#2c2c2c;"></div>
<div class="t" id="t273" style="left:928px;top:201.58px;font-size:6.8px;line-height:8.84px;color:#9a9a9a;">(0) での停止時:</div>
<div class="a" style="left:923px;top:213.5px;width:144px;height:1.5px;background:#161616;"></div>
<div class="t" id="t275" style="left:930px;top:217.58px;font-size:6.8px;line-height:8.84px;color:#d0d0d0;transform:scaleX(0.884);transform-origin:0 50%;">プロパティ: mixer juice</div>
<div class="t" style="left:996px;top:217.75px;font-size:7px;line-height:9.1px;color:#8a8a8a;">≡</div>
<div class="a" style="left:930px;top:227px;width:68px;height:1px;background:#d0d0d0;"></div>
<div class="t" id="t278" style="left:1012px;top:217.58px;font-size:6.8px;line-height:8.84px;color:#9a9a9a;transform:scaleX(0.845);transform-origin:0 50%;">エフェクト &amp;</div>
<div class="t" style="left:1056px;top:215.85px;font-size:9px;line-height:11.7px;color:#d0d0d0;font-weight:bold;">»</div>
<div class="t" id="t280" style="left:930px;top:231.58px;font-size:6.8px;line-height:8.84px;color:#c0c0c0;transform:scaleX(0.757);transform-origin:0 50%;">レイヤートランスフ...</div>
<div class="t" id="t281" style="left:995px;top:231.58px;font-size:6.8px;line-height:8.84px;color:#3f7fd0;transform:scaleX(0.938);transform-origin:0 50%;">ﾘｾｯﾄ</div>
<svg class="a" style="left:937px;top:243.5px;" width="7" height="7" viewBox="0 0 7 7"><circle cx="3.5" cy="4" r="2.6" fill="none" stroke="#b0b0b0" stroke-width="0.9"/><path d="M3.5 0.5 L3.5 1.5 M2.5 0.5 L4.5 0.5 M3.5 4 L3.5 2.5" stroke="#b0b0b0" stroke-width="0.8"/></svg>
<div class="t" id="t283" style="left:957px;top:242.58px;font-size:6.8px;line-height:8.84px;color:#a8a8a8;transform:scaleX(0.786);transform-origin:0 50%;">アンカー</div>
<svg class="a" style="left:937px;top:254.5px;" width="7" height="7" viewBox="0 0 7 7"><circle cx="3.5" cy="4" r="2.6" fill="none" stroke="#b0b0b0" stroke-width="0.9"/><path d="M3.5 0.5 L3.5 1.5 M2.5 0.5 L4.5 0.5 M3.5 4 L3.5 2.5" stroke="#b0b0b0" stroke-width="0.8"/></svg>
<div class="t" id="t285" style="left:957px;top:253.58px;font-size:6.8px;line-height:8.84px;color:#a8a8a8;transform:scaleX(0.786);transform-origin:0 50%;">位置</div>
<svg class="a" style="left:937px;top:265.3px;" width="7" height="7" viewBox="0 0 7 7"><circle cx="3.5" cy="4" r="2.6" fill="none" stroke="#b0b0b0" stroke-width="0.9"/><path d="M3.5 0.5 L3.5 1.5 M2.5 0.5 L4.5 0.5 M3.5 4 L3.5 2.5" stroke="#b0b0b0" stroke-width="0.8"/></svg>
<div class="t" id="t287" style="left:957px;top:264.38px;font-size:6.8px;line-height:8.84px;color:#a8a8a8;transform:scaleX(0.750);transform-origin:0 50%;">スケール</div>
<svg class="a" style="left:937px;top:276.5px;" width="7" height="7" viewBox="0 0 7 7"><circle cx="3.5" cy="4" r="2.6" fill="none" stroke="#b0b0b0" stroke-width="0.9"/><path d="M3.5 0.5 L3.5 1.5 M2.5 0.5 L4.5 0.5 M3.5 4 L3.5 2.5" stroke="#b0b0b0" stroke-width="0.8"/></svg>
<div class="t" id="t289" style="left:957px;top:275.58px;font-size:6.8px;line-height:8.84px;color:#a8a8a8;transform:scaleX(0.786);transform-origin:0 50%;">回転</div>
<svg class="a" style="left:937px;top:287.5px;" width="7" height="7" viewBox="0 0 7 7"><circle cx="3.5" cy="4" r="2.6" fill="none" stroke="#b0b0b0" stroke-width="0.9"/><path d="M3.5 0.5 L3.5 1.5 M2.5 0.5 L4.5 0.5 M3.5 4 L3.5 2.5" stroke="#b0b0b0" stroke-width="0.8"/></svg>
<div class="t" id="t291" style="left:957px;top:286.58px;font-size:6.8px;line-height:8.84px;color:#a8a8a8;transform:scaleX(0.929);transform-origin:0 50%;">不透明度</div>
<div class="t" id="t292" style="left:995px;top:242.58px;font-size:6.8px;line-height:8.84px;color:#3f7fd0;transform:scaleX(0.882);transform-origin:0 50%;">640</div>
<div class="a" style="left:995px;top:251px;width:10px;height:0.6px;background:#5a4a3a;"></div>
<div class="t" id="t294" style="left:1020px;top:242.58px;font-size:6.8px;line-height:8.84px;color:#3f7fd0;transform:scaleX(0.882);transform-origin:0 50%;">360</div>
<div class="a" style="left:1020px;top:251px;width:10px;height:0.6px;background:#5a4a3a;"></div>
<div class="t" id="t296" style="left:995px;top:253.58px;font-size:6.8px;line-height:8.84px;color:#3f7fd0;transform:scaleX(0.882);transform-origin:0 50%;">640</div>
<div class="a" style="left:995px;top:262px;width:10px;height:0.6px;background:#5a4a3a;"></div>
<div class="t" id="t298" style="left:1020px;top:253.58px;font-size:6.8px;line-height:8.84px;color:#3f7fd0;transform:scaleX(0.882);transform-origin:0 50%;">360</div>
<div class="a" style="left:1020px;top:262px;width:10px;height:0.6px;background:#5a4a3a;"></div>
<svg class="a" style="left:983px;top:266px;" width="10" height="6" viewBox="0 0 10 6"><circle cx="3" cy="3" r="2" fill="none" stroke="#3f7fd0" stroke-width="0.9"/><circle cx="7" cy="3" r="2" fill="none" stroke="#3f7fd0" stroke-width="0.9"/></svg>
<div class="t" id="t301" style="left:996px;top:264.38px;font-size:6.8px;line-height:8.84px;color:#3f7fd0;transform:scaleX(0.863);transform-origin:0 50%;">100%</div>
<div class="a" style="left:996px;top:272.8px;width:15px;height:0.6px;background:#5a4a3a;"></div>
<div class="t" id="t303" style="left:1020px;top:264.38px;font-size:6.8px;line-height:8.84px;color:#3f7fd0;transform:scaleX(0.863);transform-origin:0 50%;">100%</div>
<div class="a" style="left:1020px;top:272.8px;width:15px;height:0.6px;background:#5a4a3a;"></div>
<div class="t" id="t305" style="left:995px;top:275.58px;font-size:6.8px;line-height:8.84px;color:#3f7fd0;transform:scaleX(0.701);transform-origin:0 50%;">0 x +0.0°</div>
<div class="a" style="left:995px;top:284px;width:19px;height:0.6px;background:#5a4a3a;"></div>
<div class="t" id="t307" style="left:995px;top:286.58px;font-size:6.8px;line-height:8.84px;color:#3f7fd0;transform:scaleX(0.920);transform-origin:0 50%;">100%</div>
<div class="a" style="left:995px;top:295px;width:16px;height:0.6px;background:#5a4a3a;"></div>
<div class="a" style="left:0px;top:413px;width:179px;height:2px;background:#161616;"></div>
<div class="a" style="left:921px;top:413px;width:146px;height:2px;background:#161616;"></div>
<div class="a" style="left:0px;top:415.3px;width:1067px;height:185px;background:#232323;"></div>
<div class="a" style="left:15px;top:420.5px;width:6px;height:6px;background:#c9bb90;"></div>
<div class="t" id="t313" style="left:27px;top:420.58px;font-size:6.8px;line-height:8.84px;color:#8a8a8a;transform:scaleX(0.821);transform-origin:0 50%;">MainComp</div>
<div class="a" style="left:86px;top:420.5px;width:6px;height:6px;background:#c9bb90;"></div>
<div class="t" id="t315" style="left:98px;top:420.58px;font-size:6.8px;line-height:8.84px;color:#8a8a8a;transform:scaleX(0.841);transform-origin:0 50%;">cut02</div>
<div class="a" style="left:144px;top:420.5px;width:6px;height:6px;background:#c9bb90;"></div>
<div class="t" id="t317" style="left:156px;top:420.58px;font-size:6.8px;line-height:8.84px;color:#8a8a8a;transform:scaleX(0.841);transform-origin:0 50%;">cut01</div>
<div class="a" style="left:200px;top:420.5px;width:6px;height:6px;background:#c9bb90;"></div>
<div class="t" id="t319" style="left:212px;top:420.58px;font-size:6.8px;line-height:8.84px;color:#8a8a8a;transform:scaleX(0.841);transform-origin:0 50%;">cut03</div>
<div class="a" style="left:257px;top:420.5px;width:6px;height:6px;background:#c9bb90;"></div>
<div class="t" id="t321" style="left:269px;top:420.58px;font-size:6.8px;line-height:8.84px;color:#8a8a8a;transform:scaleX(0.831);transform-origin:0 50%;">CuttingBoard</div>
<div class="a" style="left:332px;top:420.5px;width:6px;height:6px;background:#c9bb90;"></div>
<div class="t" id="t323" style="left:344px;top:420.58px;font-size:6.8px;line-height:8.84px;color:#8a8a8a;transform:scaleX(0.841);transform-origin:0 50%;">cut04</div>
<div class="a" style="left:388px;top:420.5px;width:6px;height:6px;background:#c9bb90;"></div>
<div class="t" id="t325" style="left:400px;top:420.58px;font-size:6.8px;line-height:8.84px;color:#8a8a8a;transform:scaleX(0.841);transform-origin:0 50%;">cut03</div>
<div class="a" style="left:444px;top:420.5px;width:6px;height:6px;background:#c9bb90;"></div>
<div class="t" id="t327" style="left:456px;top:420.58px;font-size:6.8px;line-height:8.84px;color:#8a8a8a;transform:scaleX(0.841);transform-origin:0 50%;">cut06</div>
<div class="t" style="left:497px;top:420.3px;font-size:6px;line-height:7.8px;color:#6a6a6a;">×</div>
<div class="a" style="left:506px;top:420.5px;width:6px;height:6px;background:#c9bb90;"></div>
<div class="t" id="t330" style="left:519px;top:420.58px;font-size:6.8px;line-height:8.84px;color:#d0d0d0;transform:scaleX(1.022);transform-origin:0 50%;">cut07</div>
<div class="t" style="left:540px;top:419.95px;font-size:7px;line-height:9.1px;color:#9a9a9a;">≡</div>
<div class="a" style="left:497px;top:430px;width:47px;height:1px;background:#d0d0d0;"></div>
<div class="a" style="left:563px;top:420.5px;width:6px;height:6px;background:#c9bb90;"></div>
<div class="t" id="t334" style="left:574px;top:420.58px;font-size:6.8px;line-height:8.84px;color:#8a8a8a;transform:scaleX(0.837);transform-origin:0 50%;">strawberries</div>
<div class="a" style="left:0px;top:432px;width:1067px;height:1px;background:#1a1a1a;"></div>
<div class="t" id="t336" style="left:10px;top:431.96px;font-size:9.6px;line-height:12.48px;color:#3f8fe6;transform:scaleX(0.926);transform-origin:0 50%;">0:00:02:07</div>
<div class="t" id="t337" style="left:7px;top:442.3px;font-size:6px;line-height:7.8px;color:#2d5d95;transform:scaleX(1.020);transform-origin:0 50%;">00067 (29.97 fps)</div>
<div class="a" style="left:63px;top:436.5px;width:342px;height:9.5px;background:#181818;"></div>
<svg class="a" style="left:66px;top:437px;" width="12" height="9" viewBox="0 0 12 9"><circle cx="4" cy="3.2" r="2.2" fill="none" stroke="#c0c0c0" stroke-width="1"/><path d="M0.8 8 Q4 5 7.2 8" stroke="#c0c0c0" fill="none"/><circle cx="9" cy="7" r="1.2" fill="#c0c0c0"/></svg>
<svg class="a" style="left:412px;top:436px;" width="80" height="12" viewBox="0 0 80 12">
<path d="M2 3 L6 3 M4 3 L4 8 M7 4 L11 4 M7 6 L11 6 M9 8 L11 8" stroke="#c8c8c8" stroke-width="1.1"/>
<path d="M22 7 Q22 3 26 3 Q30 3 30 7 Z M21 8 L31 8" stroke="#c8c8c8" fill="#c8c8c8" stroke-width="1"/>
<rect x="37" y="2" width="6" height="8" fill="#c8c8c8"/><rect x="38.5" y="3.5" width="3" height="3" fill="#555"/><path d="M36 3 L36 10 L42 10" stroke="#888" fill="none"/>
<ellipse cx="55" cy="6" rx="3.5" ry="4.5" transform="rotate(40 55 6)" fill="none" stroke="#a8a8a8" stroke-width="1.5"/>
<rect x="69" y="2" width="9" height="8" fill="none" stroke="#b8b8b8" stroke-width="1"/><path d="M70 3 L77 9" stroke="#b8b8b8"/>
</svg>
<svg class="a" style="left:2px;top:453px;" width="40" height="9" viewBox="0 0 40 9">
<path d="M2 4.5 Q5.5 1 9 4.5 Q5.5 8 2 4.5 Z" fill="#c8c8c8"/><circle cx="5.5" cy="4.5" r="1.2" fill="#333"/>
<path d="M11.5 3 L13 3 L15.5 1 L15.5 8 L13 6 L11.5 6 Z" fill="#c8c8c8"/><path d="M16.5 2 Q18.5 4.5 16.5 7" stroke="#999" fill="none"/>
<circle cx="23.5" cy="4.5" r="2" fill="#c8c8c8"/>
<rect x="28.5" y="4" width="6" height="4.5" fill="#c8c8c8"/><path d="M30 4 L30 2.5 Q31.5 0.5 33 2.5 L33 4" stroke="#c8c8c8" fill="none"/>
</svg>
<svg class="a" style="left:45px;top:453px;" width="9" height="9" viewBox="0 0 9 9"><path d="M1 1 L5 1 L8 4 L4.5 7.5 L1 4 Z" fill="#c8c8c8"/><circle cx="3" cy="3" r="0.8" fill="#232323"/></svg>
<div class="t" style="left:60.5px;top:453.6px;font-size:6px;line-height:7.8px;color:#7a7a7a;">#</div>
<div class="t" id="t344" style="left:79px;top:452.95px;font-size:7px;line-height:9.1px;color:#c0c0c0;transform:scaleX(0.829);transform-origin:0 50%;">レイヤー名</div>
<svg class="a" style="left:170px;top:452px;" width="75" height="11" viewBox="0 0 75 11">
<path d="M7 7 Q7 3 10 3 Q13 3 13 7 Z M6 8 L14 8" stroke="#b0b0b0" fill="#b0b0b0" stroke-width="0.9"/>
<path d="M20 3 L22 5.5 L20 8 L18 5.5 Z" fill="#b0b0b0"/>
<path d="M25 2 L31 9" stroke="#c0c0c0" stroke-width="1"/>
<text x="33" y="8.5" font-size="7.5" font-style="italic" fill="#c0c0c0" font-family="Liberation Serif">fx</text>
<rect x="42" y="2" width="7" height="7" fill="#d0d0d0"/><rect x="43.5" y="3.5" width="3" height="3" fill="#555"/>
<ellipse cx="55" cy="5.5" rx="3.5" ry="4" transform="rotate(40 55 5.5)" fill="none" stroke="#888" stroke-width="1.5"/>
<circle cx="63.5" cy="5.5" r="3.3" fill="#d0d0d0"/><path d="M61 8 L66 3 L66 8 Z" fill="#333"/>
<circle cx="71.5" cy="5.5" r="3" fill="none" stroke="#a0a0a0" stroke-width="1"/><path d="M70 4 L73 7" stroke="#a0a0a0"/>
</svg>
<div class="t" id="t346" style="left:249px;top:452.95px;font-size:7px;line-height:9.1px;color:#c0c0c0;transform:scaleX(0.905);transform-origin:0 50%;">モード</div>
<div class="t" style="left:324px;top:453.6px;font-size:6px;line-height:7.8px;color:#7a7a7a;">T</div>
<div class="t" id="t348" style="left:330px;top:452.95px;font-size:7px;line-height:9.1px;color:#c0c0c0;transform:scaleX(0.816);transform-origin:0 50%;">トラックマット</div>
<svg class="a" style="left:406px;top:453px;" width="18" height="9" viewBox="0 0 18 9"><rect x="1" y="1" width="6.5" height="6.5" fill="#d8d8d8"/><rect x="2.5" y="2.5" width="3.5" height="3.5" fill="#333"/><rect x="10" y="1" width="6.5" height="6.5" fill="#d8d8d8"/><path d="M11.5 6.5 L14 3 L15 3" stroke="#333" fill="none"/></svg>
<div class="t" id="t350" style="left:429px;top:452.95px;font-size:7px;line-height:9.1px;color:#c0c0c0;transform:scaleX(0.743);transform-origin:0 50%;">親とリンク</div>
<div class="a" style="left:0px;top:462px;width:498px;height:0.8px;background:#1a1a1a;"></div>
<div class="a" style="left:0px;top:462.4px;width:498px;height:10.54px;background:#262626;"></div>
<div class="a" style="left:0px;top:472.14px;width:498px;height:0.8px;background:#1c1c1c;"></div>
<svg class="a" style="left:3px;top:464.66999999999996px;" width="9" height="6" viewBox="0 0 9 6"><path d="M1 3 Q4.5 -0.5 8 3 Q4.5 6.5 1 3 Z" fill="#d0d0d0"/><circle cx="4.5" cy="3" r="1.1" fill="#333"/></svg>
<div class="a" style="left:12px;top:463.4px;width:10px;height:8.54px;background:#1f1f1f;"></div>
<div class="a" style="left:23px;top:463.4px;width:10px;height:8.54px;background:#1f1f1f;"></div>
<svg class="a" style="left:42px;top:464.66999999999996px;" width="5" height="6" viewBox="0 0 5 6"><path d="M1.5 1 L3.5 3 L1.5 5" stroke="#6a6a6a" fill="none" stroke-width="0.9"/></svg>
<div class="a" style="left:48px;top:463.59999999999997px;width:8px;height:8.139999999999999px;background:#6b86e6;"></div>
<div class="t" style="left:60px;top:464.25px;font-size:6.8px;line-height:8.84px;color:#8a8a8a;">3</div>
<svg class="a" style="left:76px;top:463.66999999999996px;" width="8" height="8" viewBox="0 0 8 8"><path d="M4 0.3 L5 2.9 L7.8 3 L5.6 4.8 L6.4 7.6 L4 6 L1.6 7.6 L2.4 4.8 L0.2 3 L3 2.9 Z" fill="#d8d8d8"/></svg>
<div class="t" id="t361" style="left:88px;top:464.25px;font-size:6.8px;line-height:8.84px;color:#bcbcbc;transform:scaleX(0.837);transform-origin:0 50%;">mixer arm アウトライン</div>
<svg class="a" style="left:172px;top:463.66999999999996px;" width="22" height="8" viewBox="0 0 22 8"><path d="M4 6 Q4 2 7 2 Q10 2 10 6 Z M3 6.5 L11 6.5" stroke="#a0a0a0" fill="#a0a0a0" stroke-width="0.8"/><path d="M13.5 2.5 L15.5 4.5 L13.5 6.5 L11.5 4.5 Z" fill="#7a7a7a"/></svg>
<svg class="a" style="left:189px;top:463.16999999999996px;" width="10" height="9" viewBox="0 0 10 9"><path d="M1 8 L7.5 1" stroke="#c8c8c8" stroke-width="1.1"/></svg>
<div class="a" style="left:213px;top:463.4px;width:7.5px;height:8.54px;background:#1f1f1f;"></div>
<div class="a" style="left:221px;top:463.4px;width:7.5px;height:8.54px;background:#1f1f1f;"></div>
<div class="a" style="left:229px;top:463.4px;width:7.5px;height:8.54px;background:#1f1f1f;"></div>
<div class="a" style="left:237px;top:463.4px;width:7.5px;height:8.54px;background:#1f1f1f;"></div>
<div class="a" style="left:249px;top:463.4px;width:67px;height:8.54px;background:#1b1b1b;"></div>
<div class="t" id="t369" style="left:253px;top:464.25px;font-size:6.8px;line-height:8.84px;color:#c8c8c8;transform:scaleX(0.786);transform-origin:0 50%;">通常</div>
<svg class="a" style="left:307px;top:465.66999999999996px;" width="6" height="4" viewBox="0 0 6 4"><path d="M1 1 L3 3 L5 1" stroke="#8a8a8a" fill="none" stroke-width="0.9"/></svg>
<div class="a" style="left:325px;top:463.4px;width:8px;height:8.54px;background:#1f1f1f;"></div>
<svg class="a" style="left:330px;top:464.16999999999996px;" width="7" height="7" viewBox="0 0 7 7"><circle cx="3.5" cy="3.5" r="2.8" fill="none" stroke="#7a7a7a" stroke-width="0.9"/><path d="M2 3.5 L5 3.5" stroke="#7a7a7a" stroke-width="0.8"/></svg>
<div class="a" style="left:339px;top:463.4px;width:67px;height:8.54px;background:#1b1b1b;"></div>
<div class="t" id="t374" style="left:343px;top:464.25px;font-size:6.8px;line-height:8.84px;color:#c8c8c8;transform:scaleX(0.800);transform-origin:0 50%;">マットなし</div>
<svg class="a" style="left:397px;top:465.66999999999996px;" width="6" height="4" viewBox="0 0 6 4"><path d="M1 1 L3 3 L5 1" stroke="#8a8a8a" fill="none" stroke-width="0.9"/></svg>
<div class="a" style="left:418px;top:463.4px;width:10px;height:8.54px;background:#1f1f1f;"></div>
<svg class="a" style="left:428px;top:464.16999999999996px;" width="8" height="7" viewBox="0 0 8 7"><circle cx="4" cy="3.5" r="2.8" fill="none" stroke="#7a7a7a" stroke-width="0.9"/><path d="M2.5 3.5 L5.5 3.5" stroke="#7a7a7a" stroke-width="0.8"/></svg>
<div class="a" style="left:440px;top:463.4px;width:48px;height:8.54px;background:#1b1b1b;"></div>
<div class="t" id="t379" style="left:444px;top:464.25px;font-size:6.8px;line-height:8.84px;color:#c8c8c8;transform:scaleX(0.786);transform-origin:0 50%;">なし</div>
<svg class="a" style="left:479px;top:465.66999999999996px;" width="6" height="4" viewBox="0 0 6 4"><path d="M1 1 L3 3 L5 1" stroke="#8a8a8a" fill="none" stroke-width="0.9"/></svg>
<div class="a" style="left:0px;top:472.94px;width:498px;height:10.54px;background:#262626;"></div>
<div class="a" style="left:0px;top:482.68px;width:498px;height:0.8px;background:#1c1c1c;"></div>
<svg class="a" style="left:3px;top:475.21px;" width="9" height="6" viewBox="0 0 9 6"><path d="M1 3 Q4.5 -0.5 8 3 Q4.5 6.5 1 3 Z" fill="#d0d0d0"/><circle cx="4.5" cy="3" r="1.1" fill="#333"/></svg>
<div class="a" style="left:12px;top:473.94px;width:10px;height:8.54px;background:#1f1f1f;"></div>
<div class="a" style="left:23px;top:473.94px;width:10px;height:8.54px;background:#1f1f1f;"></div>
<svg class="a" style="left:42px;top:475.21px;" width="5" height="6" viewBox="0 0 5 6"><path d="M1.5 1 L3.5 3 L1.5 5" stroke="#6a6a6a" fill="none" stroke-width="0.9"/></svg>
<div class="a" style="left:48px;top:474.14px;width:8px;height:8.139999999999999px;background:#6b86e6;"></div>
<div class="t" style="left:60px;top:474.79px;font-size:6.8px;line-height:8.84px;color:#8a8a8a;">4</div>
<svg class="a" style="left:76px;top:474.21px;" width="8" height="8" viewBox="0 0 8 8"><path d="M4 0.3 L5 2.9 L7.8 3 L5.6 4.8 L6.4 7.6 L4 6 L1.6 7.6 L2.4 4.8 L0.2 3 L3 2.9 Z" fill="#d8d8d8"/></svg>
<div class="t" id="t390" style="left:88px;top:474.79px;font-size:6.8px;line-height:8.84px;color:#bcbcbc;transform:scaleX(0.845);transform-origin:0 50%;">mixer btn アウトライン</div>
<svg class="a" style="left:172px;top:474.21px;" width="22" height="8" viewBox="0 0 22 8"><path d="M4 6 Q4 2 7 2 Q10 2 10 6 Z M3 6.5 L11 6.5" stroke="#a0a0a0" fill="#a0a0a0" stroke-width="0.8"/><path d="M13.5 2.5 L15.5 4.5 L13.5 6.5 L11.5 4.5 Z" fill="#7a7a7a"/></svg>
<svg class="a" style="left:189px;top:473.71px;" width="10" height="9" viewBox="0 0 10 9"><path d="M1 8 L7.5 1" stroke="#c8c8c8" stroke-width="1.1"/></svg>
<div class="a" style="left:213px;top:473.94px;width:7.5px;height:8.54px;background:#1f1f1f;"></div>
<div class="a" style="left:221px;top:473.94px;width:7.5px;height:8.54px;background:#1f1f1f;"></div>
<div class="a" style="left:229px;top:473.94px;width:7.5px;height:8.54px;background:#1f1f1f;"></div>
<div class="a" style="left:237px;top:473.94px;width:7.5px;height:8.54px;background:#1f1f1f;"></div>
<div class="a" style="left:249px;top:473.94px;width:67px;height:8.54px;background:#1b1b1b;"></div>
<div class="t" id="t398" style="left:253px;top:474.79px;font-size:6.8px;line-height:8.84px;color:#c8c8c8;transform:scaleX(0.786);transform-origin:0 50%;">通常</div>
<svg class="a" style="left:307px;top:476.21px;" width="6" height="4" viewBox="0 0 6 4"><path d="M1 1 L3 3 L5 1" stroke="#8a8a8a" fill="none" stroke-width="0.9"/></svg>
<div class="a" style="left:325px;top:473.94px;width:8px;height:8.54px;background:#1f1f1f;"></div>
<svg class="a" style="left:330px;top:474.71px;" width="7" height="7" viewBox="0 0 7 7"><circle cx="3.5" cy="3.5" r="2.8" fill="none" stroke="#7a7a7a" stroke-width="0.9"/><path d="M2 3.5 L5 3.5" stroke="#7a7a7a" stroke-width="0.8"/></svg>
<div class="a" style="left:339px;top:473.94px;width:67px;height:8.54px;background:#1b1b1b;"></div>
<div class="t" id="t403" style="left:343px;top:474.79px;font-size:6.8px;line-height:8.84px;color:#c8c8c8;transform:scaleX(0.800);transform-origin:0 50%;">マットなし</div>
<svg class="a" style="left:397px;top:476.21px;" width="6" height="4" viewBox="0 0 6 4"><path d="M1 1 L3 3 L5 1" stroke="#8a8a8a" fill="none" stroke-width="0.9"/></svg>
<div class="a" style="left:418px;top:473.94px;width:10px;height:8.54px;background:#1f1f1f;"></div>
<svg class="a" style="left:428px;top:474.71px;" width="8" height="7" viewBox="0 0 8 7"><circle cx="4" cy="3.5" r="2.8" fill="none" stroke="#7a7a7a" stroke-width="0.9"/><path d="M2.5 3.5 L5.5 3.5" stroke="#7a7a7a" stroke-width="0.8"/></svg>
<div class="a" style="left:440px;top:473.94px;width:48px;height:8.54px;background:#1b1b1b;"></div>
<div class="t" id="t408" style="left:444px;top:474.79px;font-size:6.8px;line-height:8.84px;color:#c8c8c8;transform:scaleX(0.786);transform-origin:0 50%;">なし</div>
<svg class="a" style="left:479px;top:476.21px;" width="6" height="4" viewBox="0 0 6 4"><path d="M1 1 L3 3 L5 1" stroke="#8a8a8a" fill="none" stroke-width="0.9"/></svg>
<div class="a" style="left:0px;top:483.47999999999996px;width:498px;height:10.54px;background:#262626;"></div>
<div class="a" style="left:0px;top:493.21999999999997px;width:498px;height:0.8px;background:#1c1c1c;"></div>
<svg class="a" style="left:3px;top:485.74999999999994px;" width="9" height="6" viewBox="0 0 9 6"><path d="M1 3 Q4.5 -0.5 8 3 Q4.5 6.5 1 3 Z" fill="#d0d0d0"/><circle cx="4.5" cy="3" r="1.1" fill="#333"/></svg>
<div class="a" style="left:12px;top:484.47999999999996px;width:10px;height:8.54px;background:#1f1f1f;"></div>
<div class="a" style="left:23px;top:484.47999999999996px;width:10px;height:8.54px;background:#1f1f1f;"></div>
<svg class="a" style="left:42px;top:485.74999999999994px;" width="5" height="6" viewBox="0 0 5 6"><path d="M1.5 1 L3.5 3 L1.5 5" stroke="#6a6a6a" fill="none" stroke-width="0.9"/></svg>
<div class="a" style="left:48px;top:484.67999999999995px;width:8px;height:8.139999999999999px;background:#c6c4ee;"></div>
<div class="t" style="left:60px;top:485.33px;font-size:6.8px;line-height:8.84px;color:#8a8a8a;">5</div>
<svg class="a" style="left:75px;top:484.24999999999994px;" width="9" height="9" viewBox="0 0 9 9"><rect x="0.5" y="0.5" width="8" height="8" rx="2" fill="#b8381e"/><path d="M2.5 6 L4.5 3 L6.5 6 M4.5 6.5 L4.5 8" stroke="#f0d0c0" stroke-width="0.9" fill="none"/></svg>
<div class="t" id="t419" style="left:88px;top:485.33px;font-size:6.8px;line-height:8.84px;color:#bcbcbc;transform:scaleX(0.932);transform-origin:0 50%;">mixer pie</div>
<svg class="a" style="left:172px;top:484.74999999999994px;" width="22" height="8" viewBox="0 0 22 8"><path d="M4 6 Q4 2 7 2 Q10 2 10 6 Z M3 6.5 L11 6.5" stroke="#a0a0a0" fill="#a0a0a0" stroke-width="0.8"/></svg>
<svg class="a" style="left:189px;top:484.24999999999994px;" width="10" height="9" viewBox="0 0 10 9"><path d="M1 8 L7.5 1" stroke="#c8c8c8" stroke-width="1.1"/></svg>
<div class="a" style="left:213px;top:484.47999999999996px;width:7.5px;height:8.54px;background:#1f1f1f;"></div>
<div class="a" style="left:221px;top:484.47999999999996px;width:7.5px;height:8.54px;background:#1f1f1f;"></div>
<div class="a" style="left:229px;top:484.47999999999996px;width:7.5px;height:8.54px;background:#1f1f1f;"></div>
<div class="a" style="left:237px;top:484.47999999999996px;width:7.5px;height:8.54px;background:#1f1f1f;"></div>
<div class="a" style="left:249px;top:484.47999999999996px;width:67px;height:8.54px;background:#1b1b1b;"></div>
<div class="t" id="t427" style="left:253px;top:485.33px;font-size:6.8px;line-height:8.84px;color:#c8c8c8;transform:scaleX(0.786);transform-origin:0 50%;">通常</div>
<svg class="a" style="left:307px;top:486.74999999999994px;" width="6" height="4" viewBox="0 0 6 4"><path d="M1 1 L3 3 L5 1" stroke="#8a8a8a" fill="none" stroke-width="0.9"/></svg>
<div class="a" style="left:325px;top:484.47999999999996px;width:8px;height:8.54px;background:#1f1f1f;"></div>
<svg class="a" style="left:330px;top:485.24999999999994px;" width="7" height="7" viewBox="0 0 7 7"><circle cx="3.5" cy="3.5" r="2.8" fill="none" stroke="#7a7a7a" stroke-width="0.9"/><path d="M2 3.5 L5 3.5" stroke="#7a7a7a" stroke-width="0.8"/></svg>
<div class="a" style="left:339px;top:484.47999999999996px;width:67px;height:8.54px;background:#1b1b1b;"></div>
<div class="t" id="t432" style="left:343px;top:485.33px;font-size:6.8px;line-height:8.84px;color:#c8c8c8;transform:scaleX(0.800);transform-origin:0 50%;">マットなし</div>
<svg class="a" style="left:397px;top:486.74999999999994px;" width="6" height="4" viewBox="0 0 6 4"><path d="M1 1 L3 3 L5 1" stroke="#8a8a8a" fill="none" stroke-width="0.9"/></svg>
<div class="a" style="left:418px;top:484.47999999999996px;width:10px;height:8.54px;background:#1f1f1f;"></div>
<svg class="a" style="left:428px;top:485.24999999999994px;" width="8" height="7" viewBox="0 0 8 7"><circle cx="4" cy="3.5" r="2.8" fill="none" stroke="#7a7a7a" stroke-width="0.9"/><path d="M2.5 3.5 L5.5 3.5" stroke="#7a7a7a" stroke-width="0.8"/></svg>
<div class="a" style="left:440px;top:484.47999999999996px;width:48px;height:8.54px;background:#1b1b1b;"></div>
<div class="t" id="t437" style="left:444px;top:485.33px;font-size:6.8px;line-height:8.84px;color:#c8c8c8;transform:scaleX(0.786);transform-origin:0 50%;">なし</div>
<svg class="a" style="left:479px;top:486.74999999999994px;" width="6" height="4" viewBox="0 0 6 4"><path d="M1 1 L3 3 L5 1" stroke="#8a8a8a" fill="none" stroke-width="0.9"/></svg>
<div class="a" style="left:0px;top:494.02px;width:498px;height:10.54px;background:#262626;"></div>
<div class="a" style="left:0px;top:503.76px;width:498px;height:0.8px;background:#1c1c1c;"></div>
<svg class="a" style="left:3px;top:496.28999999999996px;" width="9" height="6" viewBox="0 0 9 6"><path d="M1 3 Q4.5 -0.5 8 3 Q4.5 6.5 1 3 Z" fill="#d0d0d0"/><circle cx="4.5" cy="3" r="1.1" fill="#333"/></svg>
<div class="a" style="left:12px;top:495.02px;width:10px;height:8.54px;background:#1f1f1f;"></div>
<div class="a" style="left:23px;top:495.02px;width:10px;height:8.54px;background:#1f1f1f;"></div>
<svg class="a" style="left:42px;top:496.28999999999996px;" width="5" height="6" viewBox="0 0 5 6"><path d="M1.5 1 L3.5 3 L1.5 5" stroke="#6a6a6a" fill="none" stroke-width="0.9"/></svg>
<div class="a" style="left:48px;top:495.21999999999997px;width:8px;height:8.139999999999999px;background:#6b86e6;"></div>
<div class="t" style="left:60px;top:495.87px;font-size:6.8px;line-height:8.84px;color:#8a8a8a;">6</div>
<svg class="a" style="left:76px;top:495.28999999999996px;" width="8" height="8" viewBox="0 0 8 8"><path d="M4 0.3 L5 2.9 L7.8 3 L5.6 4.8 L6.4 7.6 L4 6 L1.6 7.6 L2.4 4.8 L0.2 3 L3 2.9 Z" fill="#d8d8d8"/></svg>
<div class="t" id="t448" style="left:88px;top:495.87px;font-size:6.8px;line-height:8.84px;color:#bcbcbc;transform:scaleX(0.838);transform-origin:0 50%;">mixer cap アウトライン</div>
<svg class="a" style="left:172px;top:495.28999999999996px;" width="22" height="8" viewBox="0 0 22 8"><path d="M4 6 Q4 2 7 2 Q10 2 10 6 Z M3 6.5 L11 6.5" stroke="#a0a0a0" fill="#a0a0a0" stroke-width="0.8"/><path d="M13.5 2.5 L15.5 4.5 L13.5 6.5 L11.5 4.5 Z" fill="#7a7a7a"/></svg>
<svg class="a" style="left:189px;top:494.78999999999996px;" width="10" height="9" viewBox="0 0 10 9"><path d="M1 8 L7.5 1" stroke="#c8c8c8" stroke-width="1.1"/></svg>
<div class="a" style="left:213px;top:495.02px;width:7.5px;height:8.54px;background:#1f1f1f;"></div>
<div class="a" style="left:221px;top:495.02px;width:7.5px;height:8.54px;background:#1f1f1f;"></div>
<div class="a" style="left:229px;top:495.02px;width:7.5px;height:8.54px;background:#1f1f1f;"></div>
<div class="a" style="left:237px;top:495.02px;width:7.5px;height:8.54px;background:#1f1f1f;"></div>
<div class="a" style="left:249px;top:495.02px;width:67px;height:8.54px;background:#1b1b1b;"></div>
<div class="t" id="t456" style="left:253px;top:495.87px;font-size:6.8px;line-height:8.84px;color:#c8c8c8;transform:scaleX(0.786);transform-origin:0 50%;">通常</div>
<svg class="a" style="left:307px;top:497.28999999999996px;" width="6" height="4" viewBox="0 0 6 4"><path d="M1 1 L3 3 L5 1" stroke="#8a8a8a" fill="none" stroke-width="0.9"/></svg>
<div class="a" style="left:325px;top:495.02px;width:8px;height:8.54px;background:#1f1f1f;"></div>
<svg class="a" style="left:330px;top:495.78999999999996px;" width="7" height="7" viewBox="0 0 7 7"><circle cx="3.5" cy="3.5" r="2.8" fill="none" stroke="#7a7a7a" stroke-width="0.9"/><path d="M2 3.5 L5 3.5" stroke="#7a7a7a" stroke-width="0.8"/></svg>
<div class="a" style="left:339px;top:495.02px;width:67px;height:8.54px;background:#1b1b1b;"></div>
<div class="t" id="t461" style="left:343px;top:495.87px;font-size:6.8px;line-height:8.84px;color:#c8c8c8;transform:scaleX(0.800);transform-origin:0 50%;">マットなし</div>
<svg class="a" style="left:397px;top:497.28999999999996px;" width="6" height="4" viewBox="0 0 6 4"><path d="M1 1 L3 3 L5 1" stroke="#8a8a8a" fill="none" stroke-width="0.9"/></svg>
<div class="a" style="left:418px;top:495.02px;width:10px;height:8.54px;background:#1f1f1f;"></div>
<svg class="a" style="left:428px;top:495.78999999999996px;" width="8" height="7" viewBox="0 0 8 7"><circle cx="4" cy="3.5" r="2.8" fill="none" stroke="#7a7a7a" stroke-width="0.9"/><path d="M2.5 3.5 L5.5 3.5" stroke="#7a7a7a" stroke-width="0.8"/></svg>
<div class="a" style="left:440px;top:495.02px;width:48px;height:8.54px;background:#1b1b1b;"></div>
<div class="t" id="t466" style="left:444px;top:495.87px;font-size:6.8px;line-height:8.84px;color:#c8c8c8;transform:scaleX(0.786);transform-origin:0 50%;">なし</div>
<svg class="a" style="left:479px;top:497.28999999999996px;" width="6" height="4" viewBox="0 0 6 4"><path d="M1 1 L3 3 L5 1" stroke="#8a8a8a" fill="none" stroke-width="0.9"/></svg>
<div class="a" style="left:0px;top:504.55999999999995px;width:498px;height:10.54px;background:#262626;"></div>
<div class="a" style="left:0px;top:514.3px;width:498px;height:0.8px;background:#1c1c1c;"></div>
<div class="a" style="left:12px;top:505.55999999999995px;width:10px;height:8.54px;background:#1f1f1f;"></div>
<div class="a" style="left:23px;top:505.55999999999995px;width:10px;height:8.54px;background:#1f1f1f;"></div>
<svg class="a" style="left:42px;top:506.8299999999999px;" width="5" height="6" viewBox="0 0 5 6"><path d="M1.5 1 L3.5 3 L1.5 5" stroke="#6a6a6a" fill="none" stroke-width="0.9"/></svg>
<div class="a" style="left:48px;top:505.75999999999993px;width:8px;height:8.139999999999999px;background:#c6c4ee;"></div>
<div class="t" style="left:60px;top:506.41px;font-size:6.8px;line-height:8.84px;color:#8a8a8a;">7</div>
<svg class="a" style="left:75px;top:505.3299999999999px;" width="9" height="9" viewBox="0 0 9 9"><rect x="0.5" y="0.5" width="8" height="8" rx="2" fill="#b8381e"/><path d="M2.5 6 L4.5 3 L6.5 6 M4.5 6.5 L4.5 8" stroke="#f0d0c0" stroke-width="0.9" fill="none"/></svg>
<svg class="a" style="left:87px;top:505.8299999999999px;" width="8" height="8" viewBox="0 0 8 8"><rect x="0.5" y="0.5" width="7" height="7" fill="#1a1a1a" stroke="#c8c8c8" stroke-width="0.9"/><rect x="3" y="3" width="2.2" height="2.2" fill="#e8e8e8"/></svg>
<div class="t" id="t477" style="left:98px;top:506.41px;font-size:6.8px;line-height:8.84px;color:#bcbcbc;transform:scaleX(0.935);transform-origin:0 50%;">mixer matte 2</div>
<svg class="a" style="left:172px;top:505.8299999999999px;" width="22" height="8" viewBox="0 0 22 8"><path d="M4 6 Q4 2 7 2 Q10 2 10 6 Z M3 6.5 L11 6.5" stroke="#a0a0a0" fill="#a0a0a0" stroke-width="0.8"/></svg>
<svg class="a" style="left:189px;top:505.3299999999999px;" width="10" height="9" viewBox="0 0 10 9"><path d="M1 8 L7.5 1" stroke="#c8c8c8" stroke-width="1.1"/></svg>
<div class="a" style="left:213px;top:505.55999999999995px;width:7.5px;height:8.54px;background:#1f1f1f;"></div>
<div class="a" style="left:221px;top:505.55999999999995px;width:7.5px;height:8.54px;background:#1f1f1f;"></div>
<div class="a" style="left:229px;top:505.55999999999995px;width:7.5px;height:8.54px;background:#1f1f1f;"></div>
<div class="a" style="left:237px;top:505.55999999999995px;width:7.5px;height:8.54px;background:#1f1f1f;"></div>
<div class="a" style="left:249px;top:505.55999999999995px;width:67px;height:8.54px;background:#1b1b1b;"></div>
<div class="t" id="t485" style="left:253px;top:506.41px;font-size:6.8px;line-height:8.84px;color:#c8c8c8;transform:scaleX(0.786);transform-origin:0 50%;">通常</div>
<svg class="a" style="left:307px;top:507.8299999999999px;" width="6" height="4" viewBox="0 0 6 4"><path d="M1 1 L3 3 L5 1" stroke="#8a8a8a" fill="none" stroke-width="0.9"/></svg>
<div class="a" style="left:325px;top:505.55999999999995px;width:8px;height:8.54px;background:#1f1f1f;"></div>
<svg class="a" style="left:330px;top:506.3299999999999px;" width="7" height="7" viewBox="0 0 7 7"><circle cx="3.5" cy="3.5" r="2.8" fill="none" stroke="#7a7a7a" stroke-width="0.9"/><path d="M2 3.5 L5 3.5" stroke="#7a7a7a" stroke-width="0.8"/></svg>
<div class="a" style="left:339px;top:505.55999999999995px;width:67px;height:8.54px;background:#1b1b1b;"></div>
<div class="t" id="t490" style="left:343px;top:506.41px;font-size:6.8px;line-height:8.84px;color:#c8c8c8;transform:scaleX(0.800);transform-origin:0 50%;">マットなし</div>
<svg class="a" style="left:397px;top:507.8299999999999px;" width="6" height="4" viewBox="0 0 6 4"><path d="M1 1 L3 3 L5 1" stroke="#8a8a8a" fill="none" stroke-width="0.9"/></svg>
<div class="a" style="left:418px;top:505.55999999999995px;width:10px;height:8.54px;background:#1f1f1f;"></div>
<svg class="a" style="left:428px;top:506.3299999999999px;" width="8" height="7" viewBox="0 0 8 7"><circle cx="4" cy="3.5" r="2.8" fill="none" stroke="#7a7a7a" stroke-width="0.9"/><path d="M2.5 3.5 L5.5 3.5" stroke="#7a7a7a" stroke-width="0.8"/></svg>
<div class="a" style="left:440px;top:505.55999999999995px;width:48px;height:8.54px;background:#1b1b1b;"></div>
<div class="t" id="t495" style="left:444px;top:506.41px;font-size:6.8px;line-height:8.84px;color:#c8c8c8;transform:scaleX(0.786);transform-origin:0 50%;">なし</div>
<svg class="a" style="left:479px;top:507.8299999999999px;" width="6" height="4" viewBox="0 0 6 4"><path d="M1 1 L3 3 L5 1" stroke="#8a8a8a" fill="none" stroke-width="0.9"/></svg>
<div class="a" style="left:0px;top:515.1px;width:498px;height:10.54px;background:#393939;"></div>
<div class="a" style="left:0px;top:524.84px;width:498px;height:0.8px;background:#1c1c1c;"></div>
<svg class="a" style="left:3px;top:517.37px;" width="9" height="6" viewBox="0 0 9 6"><path d="M1 3 Q4.5 -0.5 8 3 Q4.5 6.5 1 3 Z" fill="#d0d0d0"/><circle cx="4.5" cy="3" r="1.1" fill="#333"/></svg>
<div class="a" style="left:12px;top:516.1px;width:10px;height:8.54px;background:#1f1f1f;"></div>
<div class="a" style="left:23px;top:516.1px;width:10px;height:8.54px;background:#1f1f1f;"></div>
<svg class="a" style="left:42px;top:517.37px;" width="5" height="6" viewBox="0 0 5 6"><path d="M1.5 1 L3.5 3 L1.5 5" stroke="#6a6a6a" fill="none" stroke-width="0.9"/></svg>
<div class="a" style="left:48px;top:516.3000000000001px;width:8px;height:8.139999999999999px;background:#c6c4ee;"></div>
<div class="t" style="left:60px;top:516.95px;font-size:6.8px;line-height:8.84px;color:#8a8a8a;">8</div>
<svg class="a" style="left:75px;top:515.87px;" width="9" height="9" viewBox="0 0 9 9"><rect x="0.5" y="0.5" width="8" height="8" rx="2" fill="#b8381e"/><path d="M2.5 6 L4.5 3 L6.5 6 M4.5 6.5 L4.5 8" stroke="#f0d0c0" stroke-width="0.9" fill="none"/></svg>
<svg class="a" style="left:87px;top:516.37px;" width="8" height="8" viewBox="0 0 8 8"><rect x="0.5" y="0.5" width="7" height="7" fill="#3a3a3a" stroke="#888" stroke-width="0.9"/><path d="M2 2 L6 6" stroke="#777" stroke-width="0.7"/></svg>
<div class="a" style="left:95.3px;top:515.9px;width:75px;height:8.94px;border:1px solid #8a8a8a;background:#3b3b3b;"></div>
<div class="t" id="t508" style="left:98px;top:516.95px;font-size:6.8px;line-height:8.84px;color:#b0b0b0;transform:scaleX(0.908);transform-origin:0 50%;">mixer juice</div>
<svg class="a" style="left:172px;top:516.37px;" width="22" height="8" viewBox="0 0 22 8"><path d="M4 6 Q4 2 7 2 Q10 2 10 6 Z M3 6.5 L11 6.5" stroke="#a0a0a0" fill="#a0a0a0" stroke-width="0.8"/></svg>
<svg class="a" style="left:189px;top:515.87px;" width="10" height="9" viewBox="0 0 10 9"><path d="M1 8 L7.5 1" stroke="#c8c8c8" stroke-width="1.1"/></svg>
<div class="t" style="left:199px;top:516.5px;font-size:7.5px;line-height:9.75px;color:#c0c0c0;font-family:"Liberation Serif",serif;"><i>fx</i></div>
<div class="a" style="left:213px;top:516.1px;width:7.5px;height:8.54px;background:#333;"></div>
<div class="a" style="left:221px;top:516.1px;width:7.5px;height:8.54px;background:#333;"></div>
<div class="a" style="left:229px;top:516.1px;width:7.5px;height:8.54px;background:#333;"></div>
<div class="a" style="left:237px;top:516.1px;width:7.5px;height:8.54px;background:#333;"></div>
<div class="a" style="left:249px;top:516.1px;width:67px;height:8.54px;background:#1b1b1b;"></div>
<div class="t" id="t517" style="left:253px;top:516.95px;font-size:6.8px;line-height:8.84px;color:#c8c8c8;transform:scaleX(0.786);transform-origin:0 50%;">通常</div>
<svg class="a" style="left:307px;top:518.37px;" width="6" height="4" viewBox="0 0 6 4"><path d="M1 1 L3 3 L5 1" stroke="#8a8a8a" fill="none" stroke-width="0.9"/></svg>
<div class="a" style="left:325px;top:516.1px;width:8px;height:8.54px;background:#333;"></div>
<svg class="a" style="left:330px;top:516.87px;" width="7" height="7" viewBox="0 0 7 7"><circle cx="3.5" cy="3.5" r="2.8" fill="none" stroke="#7a7a7a" stroke-width="0.9"/><path d="M2 3.5 L5 3.5" stroke="#7a7a7a" stroke-width="0.8"/></svg>
<div class="a" style="left:339px;top:516.1px;width:67px;height:8.54px;background:#1b1b1b;"></div>
<div class="t" id="t522" style="left:343px;top:516.95px;font-size:6.8px;line-height:8.84px;color:#c8c8c8;transform:scaleX(0.841);transform-origin:0 50%;">7. mixer matte 2</div>
<svg class="a" style="left:397px;top:518.37px;" width="6" height="4" viewBox="0 0 6 4"><path d="M1 1 L3 3 L5 1" stroke="#8a8a8a" fill="none" stroke-width="0.9"/></svg>
<svg class="a" style="left:408px;top:516.87px;" width="7" height="7" viewBox="0 0 7 7"><rect x="0.5" y="0.5" width="6" height="6" fill="#e8e8e8"/><rect x="2.2" y="2.2" width="2.6" height="2.6" fill="#222"/></svg>
<div class="a" style="left:418px;top:516.1px;width:10px;height:8.54px;background:#333;"></div>
<svg class="a" style="left:428px;top:516.87px;" width="8" height="7" viewBox="0 0 8 7"><circle cx="4" cy="3.5" r="2.8" fill="none" stroke="#7a7a7a" stroke-width="0.9"/><path d="M2.5 3.5 L5.5 3.5" stroke="#7a7a7a" stroke-width="0.8"/></svg>
<div class="a" style="left:440px;top:516.1px;width:48px;height:8.54px;background:#1b1b1b;"></div>
<div class="t" id="t528" style="left:444px;top:516.95px;font-size:6.8px;line-height:8.84px;color:#c8c8c8;transform:scaleX(0.786);transform-origin:0 50%;">なし</div>
<svg class="a" style="left:479px;top:518.37px;" width="6" height="4" viewBox="0 0 6 4"><path d="M1 1 L3 3 L5 1" stroke="#8a8a8a" fill="none" stroke-width="0.9"/></svg>
<div class="a" style="left:0px;top:525.64px;width:498px;height:10.54px;background:#262626;"></div>
<div class="a" style="left:0px;top:535.38px;width:498px;height:0.8px;background:#1c1c1c;"></div>
<div class="a" style="left:12px;top:526.64px;width:10px;height:8.54px;background:#1f1f1f;"></div>
<div class="a" style="left:23px;top:526.64px;width:10px;height:8.54px;background:#1f1f1f;"></div>
<svg class="a" style="left:42px;top:527.91px;" width="5" height="6" viewBox="0 0 5 6"><path d="M1.5 1 L3.5 3 L1.5 5" stroke="#6a6a6a" fill="none" stroke-width="0.9"/></svg>
<div class="a" style="left:48px;top:526.84px;width:8px;height:8.139999999999999px;background:#c6c4ee;"></div>
<div class="t" style="left:60px;top:527.49px;font-size:6.8px;line-height:8.84px;color:#8a8a8a;">9</div>
<svg class="a" style="left:75px;top:526.41px;" width="9" height="9" viewBox="0 0 9 9"><rect x="0.5" y="0.5" width="8" height="8" rx="2" fill="#b8381e"/><path d="M2.5 6 L4.5 3 L6.5 6 M4.5 6.5 L4.5 8" stroke="#f0d0c0" stroke-width="0.9" fill="none"/></svg>
<svg class="a" style="left:87px;top:526.91px;" width="8" height="8" viewBox="0 0 8 8"><rect x="0.5" y="0.5" width="7" height="7" fill="#1a1a1a" stroke="#c8c8c8" stroke-width="0.9"/><rect x="3" y="3" width="2.2" height="2.2" fill="#e8e8e8"/></svg>
<div class="t" id="t539" style="left:98px;top:527.49px;font-size:6.8px;line-height:8.84px;color:#bcbcbc;transform:scaleX(0.915);transform-origin:0 50%;">mixer matte</div>
<svg class="a" style="left:172px;top:526.91px;" width="22" height="8" viewBox="0 0 22 8"><path d="M4 6 Q4 2 7 2 Q10 2 10 6 Z M3 6.5 L11 6.5" stroke="#a0a0a0" fill="#a0a0a0" stroke-width="0.8"/></svg>
<svg class="a" style="left:189px;top:526.41px;" width="10" height="9" viewBox="0 0 10 9"><path d="M1 8 L7.5 1" stroke="#c8c8c8" stroke-width="1.1"/></svg>
<div class="a" style="left:213px;top:526.64px;width:7.5px;height:8.54px;background:#1f1f1f;"></div>
<div class="a" style="left:221px;top:526.64px;width:7.5px;height:8.54px;background:#1f1f1f;"></div>
<div class="a" style="left:229px;top:526.64px;width:7.5px;height:8.54px;background:#1f1f1f;"></div>
<div class="a" style="left:237px;top:526.64px;width:7.5px;height:8.54px;background:#1f1f1f;"></div>
<div class="a" style="left:249px;top:526.64px;width:67px;height:8.54px;background:#1b1b1b;"></div>
<div class="t" id="t547" style="left:253px;top:527.49px;font-size:6.8px;line-height:8.84px;color:#c8c8c8;transform:scaleX(0.786);transform-origin:0 50%;">通常</div>
<svg class="a" style="left:307px;top:528.91px;" width="6" height="4" viewBox="0 0 6 4"><path d="M1 1 L3 3 L5 1" stroke="#8a8a8a" fill="none" stroke-width="0.9"/></svg>
<div class="a" style="left:325px;top:526.64px;width:8px;height:8.54px;background:#1f1f1f;"></div>
<svg class="a" style="left:330px;top:527.41px;" width="7" height="7" viewBox="0 0 7 7"><circle cx="3.5" cy="3.5" r="2.8" fill="none" stroke="#7a7a7a" stroke-width="0.9"/><path d="M2 3.5 L5 3.5" stroke="#7a7a7a" stroke-width="0.8"/></svg>
<div class="a" style="left:339px;top:526.64px;width:67px;height:8.54px;background:#1b1b1b;"></div>
<div class="t" id="t552" style="left:343px;top:527.49px;font-size:6.8px;line-height:8.84px;color:#c8c8c8;transform:scaleX(0.800);transform-origin:0 50%;">マットなし</div>
<svg class="a" style="left:397px;top:528.91px;" width="6" height="4" viewBox="0 0 6 4"><path d="M1 1 L3 3 L5 1" stroke="#8a8a8a" fill="none" stroke-width="0.9"/></svg>
<div class="a" style="left:418px;top:526.64px;width:10px;height:8.54px;background:#1f1f1f;"></div>
<svg class="a" style="left:428px;top:527.41px;" width="8" height="7" viewBox="0 0 8 7"><circle cx="4" cy="3.5" r="2.8" fill="none" stroke="#7a7a7a" stroke-width="0.9"/><path d="M2.5 3.5 L5.5 3.5" stroke="#7a7a7a" stroke-width="0.8"/></svg>
<div class="a" style="left:440px;top:526.64px;width:48px;height:8.54px;background:#1b1b1b;"></div>
<div class="t" id="t557" style="left:444px;top:527.49px;font-size:6.8px;line-height:8.84px;color:#c8c8c8;transform:scaleX(0.786);transform-origin:0 50%;">なし</div>
<svg class="a" style="left:479px;top:528.91px;" width="6" height="4" viewBox="0 0 6 4"><path d="M1 1 L3 3 L5 1" stroke="#8a8a8a" fill="none" stroke-width="0.9"/></svg>
<div class="a" style="left:0px;top:536.18px;width:498px;height:10.54px;background:#262626;"></div>
<div class="a" style="left:0px;top:545.92px;width:498px;height:0.8px;background:#1c1c1c;"></div>
<svg class="a" style="left:3px;top:538.4499999999999px;" width="9" height="6" viewBox="0 0 9 6"><path d="M1 3 Q4.5 -0.5 8 3 Q4.5 6.5 1 3 Z" fill="#d0d0d0"/><circle cx="4.5" cy="3" r="1.1" fill="#333"/></svg>
<div class="a" style="left:12px;top:537.18px;width:10px;height:8.54px;background:#1f1f1f;"></div>
<div class="a" style="left:23px;top:537.18px;width:10px;height:8.54px;background:#1f1f1f;"></div>
<svg class="a" style="left:41px;top:538.9499999999999px;" width="6" height="5" viewBox="0 0 6 5"><path d="M1 1.5 L3 3.5 L5 1.5" stroke="#8a8a8a" fill="none" stroke-width="0.9"/></svg>
<div class="a" style="left:48px;top:537.38px;width:8px;height:8.139999999999999px;background:#cbbd94;"></div>
<div class="t" style="left:57px;top:538.03px;font-size:6.8px;line-height:8.84px;color:#8a8a8a;">10</div>
<svg class="a" style="left:73px;top:537.4499999999999px;" width="11" height="8" viewBox="0 0 11 8"><rect x="0" y="0" width="11" height="8" fill="#c8c8c8"/><rect x="1" y="1" width="9" height="6" fill="#4a6a5a"/><path d="M2 6 L5 3 L8 6" stroke="#b0c0a0" fill="none" stroke-width="0.8"/></svg>
<svg class="a" style="left:87px;top:537.4499999999999px;" width="8" height="8" viewBox="0 0 8 8"><rect x="0.5" y="0.5" width="7" height="7" fill="#3a3a3a" stroke="#888" stroke-width="0.9"/><path d="M2 2 L6 6" stroke="#777" stroke-width="0.7"/></svg>
<div class="t" id="t569" style="left:98px;top:538.03px;font-size:6.8px;line-height:8.84px;color:#bcbcbc;transform:scaleX(0.980);transform-origin:0 50%;">[strawberries]</div>
<svg class="a" style="left:172px;top:537.4499999999999px;" width="22" height="8" viewBox="0 0 22 8"><path d="M4 6 Q4 2 7 2 Q10 2 10 6 Z M3 6.5 L11 6.5" stroke="#a0a0a0" fill="#a0a0a0" stroke-width="0.8"/></svg>
<svg class="a" style="left:189px;top:536.9499999999999px;" width="10" height="9" viewBox="0 0 10 9"><path d="M1 8 L7.5 1" stroke="#c8c8c8" stroke-width="1.1"/></svg>
<div class="a" style="left:213px;top:537.18px;width:7.5px;height:8.54px;background:#1f1f1f;"></div>
<div class="a" style="left:221px;top:537.18px;width:7.5px;height:8.54px;background:#1f1f1f;"></div>
<div class="a" style="left:229px;top:537.18px;width:7.5px;height:8.54px;background:#1f1f1f;"></div>
<div class="a" style="left:237px;top:537.18px;width:7.5px;height:8.54px;background:#1f1f1f;"></div>
<div class="a" style="left:249px;top:537.18px;width:67px;height:8.54px;background:#1b1b1b;"></div>
<div class="t" id="t577" style="left:253px;top:538.03px;font-size:6.8px;line-height:8.84px;color:#c8c8c8;transform:scaleX(0.786);transform-origin:0 50%;">通常</div>
<svg class="a" style="left:307px;top:539.4499999999999px;" width="6" height="4" viewBox="0 0 6 4"><path d="M1 1 L3 3 L5 1" stroke="#8a8a8a" fill="none" stroke-width="0.9"/></svg>
<div class="a" style="left:325px;top:537.18px;width:8px;height:8.54px;background:#1f1f1f;"></div>
<svg class="a" style="left:330px;top:537.9499999999999px;" width="7" height="7" viewBox="0 0 7 7"><circle cx="3.5" cy="3.5" r="2.8" fill="none" stroke="#7a7a7a" stroke-width="0.9"/><path d="M2 3.5 L5 3.5" stroke="#7a7a7a" stroke-width="0.8"/></svg>
<div class="a" style="left:339px;top:537.18px;width:67px;height:8.54px;background:#1b1b1b;"></div>
<div class="t" id="t582" style="left:343px;top:538.03px;font-size:6.8px;line-height:8.84px;color:#c8c8c8;transform:scaleX(0.836);transform-origin:0 50%;">9. mixer matte</div>
<svg class="a" style="left:397px;top:539.4499999999999px;" width="6" height="4" viewBox="0 0 6 4"><path d="M1 1 L3 3 L5 1" stroke="#8a8a8a" fill="none" stroke-width="0.9"/></svg>
<svg class="a" style="left:408px;top:537.9499999999999px;" width="7" height="7" viewBox="0 0 7 7"><rect x="0.5" y="0.5" width="6" height="6" fill="#e8e8e8"/><rect x="2.2" y="2.2" width="2.6" height="2.6" fill="#222"/></svg>
<div class="a" style="left:418px;top:537.18px;width:10px;height:8.54px;background:#1f1f1f;"></div>
<svg class="a" style="left:428px;top:537.9499999999999px;" width="8" height="7" viewBox="0 0 8 7"><circle cx="4" cy="3.5" r="2.8" fill="none" stroke="#7a7a7a" stroke-width="0.9"/><path d="M2.5 3.5 L5.5 3.5" stroke="#7a7a7a" stroke-width="0.8"/></svg>
<div class="a" style="left:440px;top:537.18px;width:48px;height:8.54px;background:#1b1b1b;"></div>
<div class="t" id="t588" style="left:444px;top:538.03px;font-size:6.8px;line-height:8.84px;color:#c8c8c8;transform:scaleX(0.786);transform-origin:0 50%;">なし</div>
<svg class="a" style="left:479px;top:539.4499999999999px;" width="6" height="4" viewBox="0 0 6 4"><path d="M1 1 L3 3 L5 1" stroke="#8a8a8a" fill="none" stroke-width="0.9"/></svg>
<div class="a" style="left:0px;top:546.72px;width:498px;height:10.54px;background:#262626;"></div>
<div class="a" style="left:0px;top:556.46px;width:498px;height:0.8px;background:#1c1c1c;"></div>
<svg class="a" style="left:1px;top:548.99px;" width="22" height="6" viewBox="0 0 22 6"><path d="M4 0.5 L4 5.5 L0.5 3 Z" fill="#c0c0c0"/><path d="M11 0.5 L13.5 3 L11 5.5 L8.5 3 Z" fill="none" stroke="#c0c0c0" stroke-width="0.9"/><path d="M19 1 L21 3 L19 5" stroke="#555" fill="none" stroke-width="0.8"/></svg>
<svg class="a" style="left:71px;top:547.99px;" width="8" height="8" viewBox="0 0 8 8"><circle cx="4" cy="4.3" r="3" fill="none" stroke="#3f8fe6" stroke-width="1"/><path d="M4 0.5 L4 1.5 M4 4.3 L4 2.5" stroke="#3f8fe6" stroke-width="0.9"/></svg>
<svg class="a" style="left:81px;top:548.49px;" width="8" height="7" viewBox="0 0 8 7"><path d="M1 0.5 L1 6.5 L7 6.5 M2 5 Q4 1 6 4" stroke="#c0c0c0" fill="none" stroke-width="0.9"/></svg>
<div class="t" id="t595" style="left:93px;top:548.44px;font-size:7px;line-height:9.1px;color:#c0c0c0;transform:scaleX(0.857);transform-origin:0 50%;">位置</div>
<div class="t" id="t596" style="left:173px;top:548.57px;font-size:6.8px;line-height:8.84px;color:#3f8fe6;transform:scaleX(0.891);transform-origin:0 50%;">640.0,360.0</div>
<svg class="a" style="left:433px;top:548.49px;" width="8" height="7" viewBox="0 0 8 7"><circle cx="4" cy="3.5" r="3" fill="#4a4a4a"/></svg>
<div class="a" style="left:0px;top:557.26px;width:498px;height:10.54px;background:#262626;"></div>
<div class="a" style="left:0px;top:567.0px;width:498px;height:0.8px;background:#1c1c1c;"></div>
<svg class="a" style="left:1px;top:559.53px;" width="22" height="6" viewBox="0 0 22 6"><path d="M4 0.5 L4 5.5 L0.5 3 Z" fill="#c0c0c0"/><path d="M11 0.5 L13.5 3 L11 5.5 L8.5 3 Z" fill="none" stroke="#c0c0c0" stroke-width="0.9"/><path d="M19 1 L21 3 L19 5" stroke="#555" fill="none" stroke-width="0.8"/></svg>
<svg class="a" style="left:71px;top:558.53px;" width="8" height="8" viewBox="0 0 8 8"><circle cx="4" cy="4.3" r="3" fill="none" stroke="#3f8fe6" stroke-width="1"/><path d="M4 0.5 L4 1.5 M4 4.3 L4 2.5" stroke="#3f8fe6" stroke-width="0.9"/></svg>
<svg class="a" style="left:81px;top:559.03px;" width="8" height="7" viewBox="0 0 8 7"><path d="M1 0.5 L1 6.5 L7 6.5 M2 5 Q4 1 6 4" stroke="#c0c0c0" fill="none" stroke-width="0.9"/></svg>
<div class="t" id="t603" style="left:93px;top:558.98px;font-size:7px;line-height:9.1px;color:#c0c0c0;transform:scaleX(1.036);transform-origin:0 50%;">スケール</div>
<svg class="a" style="left:172px;top:559.53px;" width="10" height="6" viewBox="0 0 10 6"><circle cx="3" cy="3" r="2" fill="none" stroke="#b0b0b0" stroke-width="0.9"/><circle cx="7" cy="3" r="2" fill="none" stroke="#b0b0b0" stroke-width="0.9"/></svg>
<div class="t" id="t605" style="left:184px;top:559.11px;font-size:6.8px;line-height:8.84px;color:#3f8fe6;transform:scaleX(0.858);transform-origin:0 50%;">100.0,100.0%</div>
<svg class="a" style="left:433px;top:559.03px;" width="8" height="7" viewBox="0 0 8 7"><circle cx="4" cy="3.5" r="3" fill="#4a4a4a"/></svg>
<div class="a" style="left:0px;top:567.8px;width:498px;height:10.54px;background:#262626;"></div>
<div class="a" style="left:0px;top:577.54px;width:498px;height:0.8px;background:#1c1c1c;"></div>
<svg class="a" style="left:3px;top:570.0699999999999px;" width="9" height="6" viewBox="0 0 9 6"><path d="M1 3 Q4.5 -0.5 8 3 Q4.5 6.5 1 3 Z" fill="#d0d0d0"/><circle cx="4.5" cy="3" r="1.1" fill="#333"/></svg>
<div class="a" style="left:12px;top:568.8px;width:10px;height:8.54px;background:#1f1f1f;"></div>
<div class="a" style="left:23px;top:568.8px;width:10px;height:8.54px;background:#1f1f1f;"></div>
<svg class="a" style="left:42px;top:570.0699999999999px;" width="5" height="6" viewBox="0 0 5 6"><path d="M1.5 1 L3.5 3 L1.5 5" stroke="#6a6a6a" fill="none" stroke-width="0.9"/></svg>
<div class="a" style="left:48px;top:569.0px;width:8px;height:8.139999999999999px;background:#6b86e6;"></div>
<div class="t" style="left:57px;top:569.65px;font-size:6.8px;line-height:8.84px;color:#8a8a8a;">11</div>
<svg class="a" style="left:76px;top:569.0699999999999px;" width="8" height="8" viewBox="0 0 8 8"><path d="M4 0.3 L5 2.9 L7.8 3 L5.6 4.8 L6.4 7.6 L4 6 L1.6 7.6 L2.4 4.8 L0.2 3 L3 2.9 Z" fill="#d8d8d8"/></svg>
<div class="t" id="t616" style="left:88px;top:569.65px;font-size:6.8px;line-height:8.84px;color:#bcbcbc;transform:scaleX(0.840);transform-origin:0 50%;">mixer frame アウトライン</div>
<svg class="a" style="left:172px;top:569.0699999999999px;" width="22" height="8" viewBox="0 0 22 8"><path d="M4 6 Q4 2 7 2 Q10 2 10 6 Z M3 6.5 L11 6.5" stroke="#a0a0a0" fill="#a0a0a0" stroke-width="0.8"/><path d="M13.5 2.5 L15.5 4.5 L13.5 6.5 L11.5 4.5 Z" fill="#7a7a7a"/></svg>
<svg class="a" style="left:189px;top:568.5699999999999px;" width="10" height="9" viewBox="0 0 10 9"><path d="M1 8 L7.5 1" stroke="#c8c8c8" stroke-width="1.1"/></svg>
<div class="a" style="left:213px;top:568.8px;width:7.5px;height:8.54px;background:#1f1f1f;"></div>
<div class="a" style="left:221px;top:568.8px;width:7.5px;height:8.54px;background:#1f1f1f;"></div>
<div class="a" style="left:229px;top:568.8px;width:7.5px;height:8.54px;background:#1f1f1f;"></div>
<div class="a" style="left:237px;top:568.8px;width:7.5px;height:8.54px;background:#1f1f1f;"></div>
<div class="a" style="left:249px;top:568.8px;width:67px;height:8.54px;background:#1b1b1b;"></div>
<div class="t" id="t624" style="left:253px;top:569.65px;font-size:6.8px;line-height:8.84px;color:#c8c8c8;transform:scaleX(0.786);transform-origin:0 50%;">通常</div>
<svg class="a" style="left:307px;top:571.0699999999999px;" width="6" height="4" viewBox="0 0 6 4"><path d="M1 1 L3 3 L5 1" stroke="#8a8a8a" fill="none" stroke-width="0.9"/></svg>
<div class="a" style="left:325px;top:568.8px;width:8px;height:8.54px;background:#1f1f1f;"></div>
<svg class="a" style="left:330px;top:569.5699999999999px;" width="7" height="7" viewBox="0 0 7 7"><circle cx="3.5" cy="3.5" r="2.8" fill="none" stroke="#7a7a7a" stroke-width="0.9"/><path d="M2 3.5 L5 3.5" stroke="#7a7a7a" stroke-width="0.8"/></svg>
<div class="a" style="left:339px;top:568.8px;width:67px;height:8.54px;background:#1b1b1b;"></div>
<div class="t" id="t629" style="left:343px;top:569.65px;font-size:6.8px;line-height:8.84px;color:#c8c8c8;transform:scaleX(0.800);transform-origin:0 50%;">マットなし</div>
<svg class="a" style="left:397px;top:571.0699999999999px;" width="6" height="4" viewBox="0 0 6 4"><path d="M1 1 L3 3 L5 1" stroke="#8a8a8a" fill="none" stroke-width="0.9"/></svg>
<div class="a" style="left:418px;top:568.8px;width:10px;height:8.54px;background:#1f1f1f;"></div>
<svg class="a" style="left:428px;top:569.5699999999999px;" width="8" height="7" viewBox="0 0 8 7"><circle cx="4" cy="3.5" r="2.8" fill="none" stroke="#7a7a7a" stroke-width="0.9"/><path d="M2.5 3.5 L5.5 3.5" stroke="#7a7a7a" stroke-width="0.8"/></svg>
<div class="a" style="left:440px;top:568.8px;width:48px;height:8.54px;background:#1b1b1b;"></div>
<div class="t" id="t634" style="left:444px;top:569.65px;font-size:6.8px;line-height:8.84px;color:#c8c8c8;transform:scaleX(0.786);transform-origin:0 50%;">なし</div>
<svg class="a" style="left:479px;top:571.0699999999999px;" width="6" height="4" viewBox="0 0 6 4"><path d="M1 1 L3 3 L5 1" stroke="#8a8a8a" fill="none" stroke-width="0.9"/></svg>
<div class="a" style="left:0px;top:578.3399999999999px;width:498px;height:10.54px;background:#262626;"></div>
<div class="a" style="left:0px;top:588.0799999999999px;width:498px;height:0.8px;background:#1c1c1c;"></div>
<svg class="a" style="left:3px;top:580.6099999999999px;" width="9" height="6" viewBox="0 0 9 6"><path d="M1 3 Q4.5 -0.5 8 3 Q4.5 6.5 1 3 Z" fill="#d0d0d0"/><circle cx="4.5" cy="3" r="1.1" fill="#333"/></svg>
<div class="a" style="left:12px;top:579.3399999999999px;width:10px;height:8.54px;background:#1f1f1f;"></div>
<div class="a" style="left:23px;top:579.3399999999999px;width:10px;height:8.54px;background:#1f1f1f;"></div>
<svg class="a" style="left:42px;top:580.6099999999999px;" width="5" height="6" viewBox="0 0 5 6"><path d="M1.5 1 L3.5 3 L1.5 5" stroke="#6a6a6a" fill="none" stroke-width="0.9"/></svg>
<div class="a" style="left:48px;top:579.54px;width:8px;height:8.139999999999999px;background:#6b86e6;"></div>
<div class="t" style="left:57px;top:580.19px;font-size:6.8px;line-height:8.84px;color:#8a8a8a;">12</div>
<svg class="a" style="left:76px;top:579.6099999999999px;" width="8" height="8" viewBox="0 0 8 8"><path d="M4 0.3 L5 2.9 L7.8 3 L5.6 4.8 L6.4 7.6 L4 6 L1.6 7.6 L2.4 4.8 L0.2 3 L3 2.9 Z" fill="#d8d8d8"/></svg>
<div class="t" id="t645" style="left:88px;top:580.19px;font-size:6.8px;line-height:8.84px;color:#bcbcbc;transform:scaleX(0.836);transform-origin:0 50%;">mixer base アウトライン</div>
<svg class="a" style="left:172px;top:579.6099999999999px;" width="22" height="8" viewBox="0 0 22 8"><path d="M4 6 Q4 2 7 2 Q10 2 10 6 Z M3 6.5 L11 6.5" stroke="#a0a0a0" fill="#a0a0a0" stroke-width="0.8"/><path d="M13.5 2.5 L15.5 4.5 L13.5 6.5 L11.5 4.5 Z" fill="#7a7a7a"/></svg>
<svg class="a" style="left:189px;top:579.1099999999999px;" width="10" height="9" viewBox="0 0 10 9"><path d="M1 8 L7.5 1" stroke="#c8c8c8" stroke-width="1.1"/></svg>
<div class="a" style="left:213px;top:579.3399999999999px;width:7.5px;height:8.54px;background:#1f1f1f;"></div>
<div class="a" style="left:221px;top:579.3399999999999px;width:7.5px;height:8.54px;background:#1f1f1f;"></div>
<div class="a" style="left:229px;top:579.3399999999999px;width:7.5px;height:8.54px;background:#1f1f1f;"></div>
<div class="a" style="left:237px;top:579.3399999999999px;width:7.5px;height:8.54px;background:#1f1f1f;"></div>
<div class="a" style="left:249px;top:579.3399999999999px;width:67px;height:8.54px;background:#1b1b1b;"></div>
<div class="t" id="t653" style="left:253px;top:580.19px;font-size:6.8px;line-height:8.84px;color:#c8c8c8;transform:scaleX(0.786);transform-origin:0 50%;">通常</div>
<svg class="a" style="left:307px;top:581.6099999999999px;" width="6" height="4" viewBox="0 0 6 4"><path d="M1 1 L3 3 L5 1" stroke="#8a8a8a" fill="none" stroke-width="0.9"/></svg>
<div class="a" style="left:325px;top:579.3399999999999px;width:8px;height:8.54px;background:#1f1f1f;"></div>
<svg class="a" style="left:330px;top:580.1099999999999px;" width="7" height="7" viewBox="0 0 7 7"><circle cx="3.5" cy="3.5" r="2.8" fill="none" stroke="#7a7a7a" stroke-width="0.9"/><path d="M2 3.5 L5 3.5" stroke="#7a7a7a" stroke-width="0.8"/></svg>
<div class="a" style="left:339px;top:579.3399999999999px;width:67px;height:8.54px;background:#1b1b1b;"></div>
<div class="t" id="t658" style="left:343px;top:580.19px;font-size:6.8px;line-height:8.84px;color:#c8c8c8;transform:scaleX(0.800);transform-origin:0 50%;">マットなし</div>
<svg class="a" style="left:397px;top:581.6099999999999px;" width="6" height="4" viewBox="0 0 6 4"><path d="M1 1 L3 3 L5 1" stroke="#8a8a8a" fill="none" stroke-width="0.9"/></svg>
<div class="a" style="left:418px;top:579.3399999999999px;width:10px;height:8.54px;background:#1f1f1f;"></div>
<svg class="a" style="left:428px;top:580.1099999999999px;" width="8" height="7" viewBox="0 0 8 7"><circle cx="4" cy="3.5" r="2.8" fill="none" stroke="#7a7a7a" stroke-width="0.9"/><path d="M2.5 3.5 L5.5 3.5" stroke="#7a7a7a" stroke-width="0.8"/></svg>
<div class="a" style="left:440px;top:579.3399999999999px;width:48px;height:8.54px;background:#1b1b1b;"></div>
<div class="t" id="t663" style="left:444px;top:580.19px;font-size:6.8px;line-height:8.84px;color:#c8c8c8;transform:scaleX(0.786);transform-origin:0 50%;">なし</div>
<svg class="a" style="left:479px;top:581.6099999999999px;" width="6" height="4" viewBox="0 0 6 4"><path d="M1 1 L3 3 L5 1" stroke="#8a8a8a" fill="none" stroke-width="0.9"/></svg>
<div class="a" style="left:0px;top:589px;width:1067px;height:11px;background:#232323;"></div>
<div class="a" style="left:0px;top:588.5px;width:1067px;height:0.8px;background:#1a1a1a;"></div>
<svg class="a" style="left:2px;top:590px;" width="50" height="10" viewBox="0 0 50 10">
<path d="M3 2 L8 2 L8 7 L3 7 Z" fill="#3f8fe6"/><path d="M4 3 L7 3 L7 6 L4 6 Z" fill="#1b2740"/>
<circle cx="19.5" cy="5" r="3" fill="none" stroke="#3f8fe6" stroke-width="1.2"/>
<circle cx="29.5" cy="5" r="2.5" fill="#a8a8a8"/><circle cx="29.5" cy="5" r="1" fill="#232323"/>
<rect x="36" y="2" width="8" height="6" fill="#a8a8a8"/><rect x="37.5" y="3.5" width="3" height="2" fill="#232323"/>
</svg>
<div class="t" id="t668" style="left:60px;top:590.25px;font-size:7px;line-height:9.1px;color:#c0c0c0;transform:scaleX(0.762);transform-origin:0 50%;">フレームレンダリング時間</div>
<div class="t" id="t669" style="left:127px;top:590.7px;font-size:6.3px;line-height:8.19px;color:#3ab07a;transform:scaleX(0.844);transform-origin:0 50%;">10ms</div>
<div class="a" style="left:497px;top:432px;width:2.5px;height:157px;background:#141414;"></div>
<div class="a" style="left:499.5px;top:433px;width:557px;height:29px;background:#232323;"></div>
<div class="a" style="left:499px;top:436px;width:557px;height:3.6px;background:#5e5e5e;"></div>
<div class="a" style="left:499px;top:435.5px;width:4px;height:4.5px;background:#3d8ae6;border-radius:1px"></div>
<div class="a" style="left:1052px;top:435.5px;width:4px;height:4.5px;background:#3d8ae6;border-radius:1px"></div>
<div class="t" id="t675" style="left:499px;top:440.2px;font-size:6.3px;line-height:8.19px;color:#c0c0c0;transform:scaleX(0.856);transform-origin:0 50%;">0:00f</div>
<div class="a" style="left:503.0px;top:449.5px;width:0.8px;height:1.6px;background:#8a8a8a;"></div>
<div class="t" id="t677" style="left:529.5px;top:440.2px;font-size:6.3px;line-height:8.19px;color:#c0c0c0;transform:scaleX(0.913);transform-origin:0 50%;">05f</div>
<div class="a" style="left:533.5px;top:449.5px;width:0.8px;height:1.6px;background:#8a8a8a;"></div>
<div class="t" id="t679" style="left:560.0px;top:440.2px;font-size:6.3px;line-height:8.19px;color:#c0c0c0;transform:scaleX(0.913);transform-origin:0 50%;">10f</div>
<div class="a" style="left:564.0px;top:449.5px;width:0.8px;height:1.6px;background:#8a8a8a;"></div>
<div class="t" id="t681" style="left:590.5px;top:440.2px;font-size:6.3px;line-height:8.19px;color:#c0c0c0;transform:scaleX(0.913);transform-origin:0 50%;">15f</div>
<div class="a" style="left:594.5px;top:449.5px;width:0.8px;height:1.6px;background:#8a8a8a;"></div>
<div class="t" id="t683" style="left:621.0px;top:440.2px;font-size:6.3px;line-height:8.19px;color:#c0c0c0;transform:scaleX(0.913);transform-origin:0 50%;">20f</div>
<div class="a" style="left:625.0px;top:449.5px;width:0.8px;height:1.6px;background:#8a8a8a;"></div>
<div class="t" id="t685" style="left:651.5px;top:440.2px;font-size:6.3px;line-height:8.19px;color:#c0c0c0;transform:scaleX(0.913);transform-origin:0 50%;">25f</div>
<div class="a" style="left:655.5px;top:449.5px;width:0.8px;height:1.6px;background:#8a8a8a;"></div>
<div class="t" id="t687" style="left:678.0px;top:440.2px;font-size:6.3px;line-height:8.19px;color:#c0c0c0;transform:scaleX(0.913);transform-origin:0 50%;">01:00f</div>
<div class="a" style="left:686.0px;top:449.5px;width:0.8px;height:1.6px;background:#8a8a8a;"></div>
<div class="t" id="t689" style="left:712.5px;top:440.2px;font-size:6.3px;line-height:8.19px;color:#c0c0c0;transform:scaleX(0.913);transform-origin:0 50%;">05f</div>
<div class="a" style="left:716.5px;top:449.5px;width:0.8px;height:1.6px;background:#8a8a8a;"></div>
<div class="t" id="t691" style="left:743.0px;top:440.2px;font-size:6.3px;line-height:8.19px;color:#c0c0c0;transform:scaleX(0.913);transform-origin:0 50%;">10f</div>
<div class="a" style="left:747.0px;top:449.5px;width:0.8px;height:1.6px;background:#8a8a8a;"></div>
<div class="t" id="t693" style="left:773.5px;top:440.2px;font-size:6.3px;line-height:8.19px;color:#c0c0c0;transform:scaleX(0.913);transform-origin:0 50%;">15f</div>
<div class="a" style="left:777.5px;top:449.5px;width:0.8px;height:1.6px;background:#8a8a8a;"></div>
<div class="t" id="t695" style="left:804.0px;top:440.2px;font-size:6.3px;line-height:8.19px;color:#c0c0c0;transform:scaleX(0.913);transform-origin:0 50%;">20f</div>
<div class="a" style="left:808.0px;top:449.5px;width:0.8px;height:1.6px;background:#8a8a8a;"></div>
<div class="t" id="t697" style="left:834.5px;top:440.2px;font-size:6.3px;line-height:8.19px;color:#c0c0c0;transform:scaleX(0.913);transform-origin:0 50%;">25f</div>
<div class="a" style="left:838.5px;top:449.5px;width:0.8px;height:1.6px;background:#8a8a8a;"></div>
<div class="t" id="t699" style="left:861.0px;top:440.2px;font-size:6.3px;line-height:8.19px;color:#c0c0c0;transform:scaleX(0.913);transform-origin:0 50%;">02:00f</div>
<div class="a" style="left:869.0px;top:449.5px;width:0.8px;height:1.6px;background:#8a8a8a;"></div>
<div class="t" id="t701" style="left:895.5px;top:440.2px;font-size:6.3px;line-height:8.19px;color:#c0c0c0;transform:scaleX(0.913);transform-origin:0 50%;">05f</div>
<div class="a" style="left:899.5px;top:449.5px;width:0.8px;height:1.6px;background:#8a8a8a;"></div>
<div class="t" id="t703" style="left:926.0px;top:440.2px;font-size:6.3px;line-height:8.19px;color:#c0c0c0;transform:scaleX(0.913);transform-origin:0 50%;">10f</div>
<div class="a" style="left:930.0px;top:449.5px;width:0.8px;height:1.6px;background:#8a8a8a;"></div>
<div class="t" id="t705" style="left:956.5px;top:440.2px;font-size:6.3px;line-height:8.19px;color:#c0c0c0;transform:scaleX(0.913);transform-origin:0 50%;">15f</div>
<div class="a" style="left:960.5px;top:449.5px;width:0.8px;height:1.6px;background:#8a8a8a;"></div>
<div class="t" id="t707" style="left:987.0px;top:440.2px;font-size:6.3px;line-height:8.19px;color:#c0c0c0;transform:scaleX(0.913);transform-origin:0 50%;">20f</div>
<div class="a" style="left:991.0px;top:449.5px;width:0.8px;height:1.6px;background:#8a8a8a;"></div>
<div class="t" id="t709" style="left:1017.5px;top:440.2px;font-size:6.3px;line-height:8.19px;color:#c0c0c0;transform:scaleX(0.913);transform-origin:0 50%;">25f</div>
<div class="a" style="left:1021.5px;top:449.5px;width:0.8px;height:1.6px;background:#8a8a8a;"></div>
<div class="t" id="t711" style="left:1046px;top:440.2px;font-size:6.3px;line-height:8.19px;color:#c0c0c0;transform:scaleX(0.815);transform-origin:0 50%;overflow:hidden;">03:0</div>
<div class="a" style="left:1052.0px;top:449.5px;width:0.8px;height:1.6px;background:#8a8a8a;"></div>
<div class="a" style="left:499px;top:452px;width:557px;height:8.5px;background:#6a6a6a;"></div>
<div class="a" style="left:499px;top:452px;width:4px;height:8.5px;background:#3d8ae6;border-radius:1px"></div>
<div class="a" style="left:1052px;top:452px;width:4px;height:8.5px;background:#3d8ae6;border-radius:1px"></div>
<svg class="a" style="left:653px;top:452px;" width="66" height="9" viewBox="0 0 66 9">
<path d="M2 8.5 L5 4.5 L8 8.5 Z" fill="#e8e8e8"/><rect x="5" y="1" width="9" height="6" fill="#e8e8e8"/><path d="M7 3 L12 3 M7 5 L11 5" stroke="#777" stroke-width="0.7"/>
<path d="M52 8.5 L55 4.5 L58 8.5 Z" fill="#e8e8e8"/><rect x="55" y="1" width="9" height="6" fill="#e8e8e8"/><path d="M57 3 L62 3 M57 5 L61 5" stroke="#777" stroke-width="0.7"/>
</svg>
<div class="a" style="left:1056px;top:432px;width:11px;height:157px;background:#262626;"></div>
<svg class="a" style="left:1057px;top:452px;" width="10" height="22" viewBox="0 0 10 22"><path d="M1.5 1 L8.5 1 L8.5 7 L5 9.5 L1.5 7 Z" fill="#e0e0e0"/><path d="M3.5 3 L6.5 3 M3.5 5 L6.5 5" stroke="#777" stroke-width="0.7"/><path d="M2 18 L5 13 L8 15 L8 19 Z" fill="#d0d0d0"/><circle cx="4" cy="17" r="2" fill="#888"/></svg>
<div class="a" style="left:499px;top:460.5px;width:557px;height:2px;background:#1b1b1b;"></div>
<div class="a" style="left:499.5px;top:462.4px;width:556.5px;height:10.54px;background:#3b3b3b;"></div>
<div class="a" style="left:499.5px;top:472.04px;width:556.5px;height:0.9px;background:#2c2c2c;"></div>
<div class="a" style="left:499.5px;top:462.4px;width:4px;height:10.54px;background:#2e2e2e;"></div>
<div class="a" style="left:655.5px;top:463.2px;width:400.5px;height:8.54px;background:#515b98;"></div>
<div class="a" style="left:655.5px;top:471.54px;width:400.5px;height:1.2px;background:#1f2235;"></div>
<div class="a" style="left:499.5px;top:472.94px;width:556.5px;height:10.54px;background:#3b3b3b;"></div>
<div class="a" style="left:499.5px;top:482.58000000000004px;width:556.5px;height:0.9px;background:#2c2c2c;"></div>
<div class="a" style="left:499.5px;top:472.94px;width:4px;height:10.54px;background:#2e2e2e;"></div>
<div class="a" style="left:655.5px;top:473.74px;width:400.5px;height:8.54px;background:#515b98;"></div>
<div class="a" style="left:655.5px;top:482.08000000000004px;width:400.5px;height:1.2px;background:#1f2235;"></div>
<div class="a" style="left:499.5px;top:483.47999999999996px;width:556.5px;height:10.54px;background:#3b3b3b;"></div>
<div class="a" style="left:499.5px;top:493.12px;width:556.5px;height:0.9px;background:#2c2c2c;"></div>
<div class="a" style="left:499.5px;top:483.47999999999996px;width:4px;height:10.54px;background:#2e2e2e;"></div>
<div class="a" style="left:655.5px;top:484.28px;width:400.5px;height:8.54px;background:#7a798c;"></div>
<div class="a" style="left:655.5px;top:492.62px;width:400.5px;height:1.2px;background:#2a2a32;"></div>
<div class="a" style="left:499.5px;top:494.02px;width:556.5px;height:10.54px;background:#3b3b3b;"></div>
<div class="a" style="left:499.5px;top:503.66px;width:556.5px;height:0.9px;background:#2c2c2c;"></div>
<div class="a" style="left:499.5px;top:494.02px;width:4px;height:10.54px;background:#2e2e2e;"></div>
<div class="a" style="left:655.5px;top:494.82px;width:400.5px;height:8.54px;background:#515b98;"></div>
<div class="a" style="left:655.5px;top:503.16px;width:400.5px;height:1.2px;background:#1f2235;"></div>
<div class="a" style="left:499.5px;top:504.55999999999995px;width:556.5px;height:10.54px;background:#3b3b3b;"></div>
<div class="a" style="left:499.5px;top:514.1999999999999px;width:556.5px;height:0.9px;background:#2c2c2c;"></div>
<div class="a" style="left:499.5px;top:504.55999999999995px;width:4px;height:10.54px;background:#2e2e2e;"></div>
<div class="a" style="left:655.5px;top:505.35999999999996px;width:400.5px;height:8.54px;background:#7a798c;"></div>
<div class="a" style="left:655.5px;top:513.6999999999999px;width:400.5px;height:1.2px;background:#2a2a32;"></div>
<div class="a" style="left:499.5px;top:515.1px;width:556.5px;height:10.54px;background:#4d4d4d;"></div>
<div class="a" style="left:499.5px;top:524.74px;width:556.5px;height:0.9px;background:#2c2c2c;"></div>
<div class="a" style="left:499.5px;top:515.1px;width:4px;height:10.54px;background:#444;"></div>
<div class="a" style="left:789.5px;top:516.4px;width:266.5px;height:7.9399999999999995px;background:#a7a5c8;"></div>
<div class="a" style="left:655.5px;top:516.4px;width:134px;height:7.9399999999999995px;background:#555555;"></div>
<div class="a" style="left:499.5px;top:525.64px;width:556.5px;height:10.54px;background:#3b3b3b;"></div>
<div class="a" style="left:499.5px;top:535.28px;width:556.5px;height:0.9px;background:#2c2c2c;"></div>
<div class="a" style="left:499.5px;top:525.64px;width:4px;height:10.54px;background:#2e2e2e;"></div>
<div class="a" style="left:655.5px;top:526.4399999999999px;width:400.5px;height:8.54px;background:#7a798c;"></div>
<div class="a" style="left:655.5px;top:534.78px;width:400.5px;height:1.2px;background:#2a2a32;"></div>
<div class="a" style="left:499.5px;top:536.18px;width:556.5px;height:10.54px;background:#3b3b3b;"></div>
<div class="a" style="left:499.5px;top:545.8199999999999px;width:556.5px;height:0.9px;background:#2c2c2c;"></div>
<div class="a" style="left:499.5px;top:536.18px;width:4px;height:10.54px;background:#2e2e2e;"></div>
<div class="a" style="left:655.5px;top:536.9799999999999px;width:400.5px;height:8.54px;background:#7b735c;"></div>
<div class="a" style="left:655.5px;top:545.3199999999999px;width:400.5px;height:1.2px;background:#2a2a32;"></div>
<div class="a" style="left:499.5px;top:546.72px;width:556.5px;height:10.54px;background:#333333;"></div>
<div class="a" style="left:499.5px;top:556.36px;width:556.5px;height:0.9px;background:#2c2c2c;"></div>
<div class="a" style="left:499.5px;top:546.72px;width:4px;height:10.54px;background:#2e2e2e;"></div>
<div class="a" style="left:499.5px;top:557.26px;width:556.5px;height:10.54px;background:#333333;"></div>
<div class="a" style="left:499.5px;top:566.9px;width:556.5px;height:0.9px;background:#2c2c2c;"></div>
<div class="a" style="left:499.5px;top:557.26px;width:4px;height:10.54px;background:#2e2e2e;"></div>
<div class="a" style="left:499.5px;top:567.8px;width:556.5px;height:10.54px;background:#3b3b3b;"></div>
<div class="a" style="left:499.5px;top:577.4399999999999px;width:556.5px;height:0.9px;background:#2c2c2c;"></div>
<div class="a" style="left:499.5px;top:567.8px;width:4px;height:10.54px;background:#2e2e2e;"></div>
<div class="a" style="left:655.5px;top:568.5999999999999px;width:400.5px;height:8.54px;background:#515b98;"></div>
<div class="a" style="left:655.5px;top:576.9399999999999px;width:400.5px;height:1.2px;background:#1f2235;"></div>
<div class="a" style="left:499.5px;top:578.3399999999999px;width:556.5px;height:10.54px;background:#3b3b3b;"></div>
<div class="a" style="left:499.5px;top:587.9799999999999px;width:556.5px;height:0.9px;background:#2c2c2c;"></div>
<div class="a" style="left:499.5px;top:578.3399999999999px;width:4px;height:10.54px;background:#2e2e2e;"></div>
<div class="a" style="left:655.5px;top:579.1399999999999px;width:400.5px;height:8.54px;background:#515b98;"></div>
<div class="a" style="left:655.5px;top:587.4799999999999px;width:400.5px;height:1.2px;background:#1f2235;"></div>
<svg class="a" style="left:725px;top:549.3px;" width="8" height="6" viewBox="0 0 8 6"><path d="M4 0.5 L7 3 L4 5.5 L1 3 Z" fill="#d0d0d0"/></svg>
<svg class="a" style="left:774px;top:548.8px;" width="8" height="7" viewBox="0 0 8 7"><path d="M1 0.5 L7 0.5 L4 3.5 Z M1 6.5 L7 6.5 L4 3.5 Z" fill="#d0d0d0"/></svg>
<svg class="a" style="left:725px;top:559.8px;" width="8" height="6" viewBox="0 0 8 6"><path d="M4 0.5 L7 3 L4 5.5 L1 3 Z" fill="#d0d0d0"/></svg>
<svg class="a" style="left:774px;top:559.3px;" width="8" height="7" viewBox="0 0 8 7"><path d="M1 0.5 L7 0.5 L4 3.5 Z M1 6.5 L7 6.5 L4 3.5 Z" fill="#d0d0d0"/></svg>
<svg class="a" style="left:908px;top:442px;" width="10" height="10" viewBox="0 0 10 10"><path d="M0.5 0.5 L8.5 0.5 L8.5 6 L4.5 9.5 L0.5 6 Z" fill="#3d8ae6"/><path d="M2.5 2.5 L6.5 2.5 M2.5 4.5 L6.5 4.5" stroke="#9cc4f4" stroke-width="0.7"/></svg>
<div class="a" style="left:912px;top:442px;width:1.2px;height:146.5px;background:#3d8ae6;"></div>
<div class="a" style="left:913px;top:460.5px;width:6px;height:1.5px;background:#3ab07a;"></div>
<svg class="a" style="left:499px;top:589px;" width="70" height="11" viewBox="0 0 70 11">
<path d="M3 6 L9 6" stroke="#c0c0c0" stroke-width="1.2"/><path d="M3 6 L6 3.5 L6 8.5 Z" fill="#c0c0c0"/>
<path d="M20 5.5 L42 5.5" stroke="#555" stroke-width="1"/>
<circle cx="17.5" cy="5.5" r="2.5" fill="#232323" stroke="#c8c8c8" stroke-width="1"/>
<path d="M47 8 L50 4 L52 6 L54 3 L57 8 Z" fill="#c0c0c0"/>
</svg>
<script>(function(){var W={"t3":377,"t8":25.4,"t9":20.200000000000003,"t10":44,"t11":27,"t12":30,"t13":42,"t14":20.5,"t15":34.60000000000002,"t16":25.5,"t19":19,"t20":25.5,"t21":25,"t22":12,"t23":31.600000000000023,"t24":11.5,"t25":24.100000000000023,"t26":24.700000000000045,"t31":28,"t37":33,"t39":25,"t40":79,"t41":59,"t44":15,"t47":16,"t53":31,"t57":35,"t61":35,"t65":35,"t69":35,"t73":35,"t77":35,"t81":35,"t86":31,"t90":35,"t95":31,"t100":31,"t104":35,"t108":35,"t113":31,"t118":35,"t123":31,"t128":12,"t135":53,"t136":29,"t139":53,"t144":58,"t145":10,"t147":13,"t149":37,"t153":8,"t154":10,"t158":18,"t159":13,"t161":28,"t164":31,"t167":20,"t168":6,"t171":13,"t172":21,"t175":49,"t177":13,"t179":41,"t183":44,"t185":46,"t187":8,"t204":34,"t205":15,"t208":38,"t209":28,"t212":14,"t214":31,"t222":18,"t224":31,"t227":11,"t229":30,"t232":13,"t233":26,"t236":13,"t240":32,"t245":27,"t249":49,"t250":12,"t252":28,"t254":46,"t256":27,"t258":20,"t259":18,"t260":18,"t262":17,"t268":12,"t271":33,"t273":47,"t275":63,"t278":35,"t280":52,"t281":15,"t283":22,"t285":11,"t287":21,"t289":11,"t291":26,"t292":10,"t294":10,"t296":10,"t298":10,"t301":15,"t303":15,"t305":19,"t307":16,"t313":27,"t315":14,"t317":14,"t319":14,"t321":33,"t323":14,"t325":14,"t327":14,"t330":17,"t334":31,"t336":42,"t337":48,"t344":29,"t346":19,"t348":40,"t350":26,"t361":62,"t369":11,"t374":28,"t379":11,"t390":60.7,"t398":11,"t403":28,"t408":11,"t419":25.7,"t427":11,"t432":28,"t437":11,"t448":61.5,"t456":11,"t461":28,"t466":11,"t477":38.5,"t485":11,"t490":28,"t495":11,"t508":29.5,"t517":11,"t522":41,"t528":11,"t539":32.5,"t547":11,"t552":28,"t557":11,"t569":40,"t577":11,"t582":36,"t588":11,"t595":12,"t596":32,"t603":29,"t605":36,"t616":67,"t624":11,"t629":28,"t634":11,"t645":64.5,"t653":11,"t658":28,"t663":11,"t668":64,"t669":13,"t675":12,"t677":8,"t679":8,"t681":8,"t683":8,"t685":8,"t687":16,"t689":8,"t691":8,"t693":8,"t695":8,"t697":8,"t699":16,"t701":8,"t703":8,"t705":8,"t707":8,"t709":8,"t711":10};for(var k in W){var e=document.getElementById(k);if(!e)continue;e.style.transform="none";var r=e.getBoundingClientRect().width;if(r>0){e.style.transform="scaleX("+(W[k]/r)+")";}}})();</script>
</body></html>
